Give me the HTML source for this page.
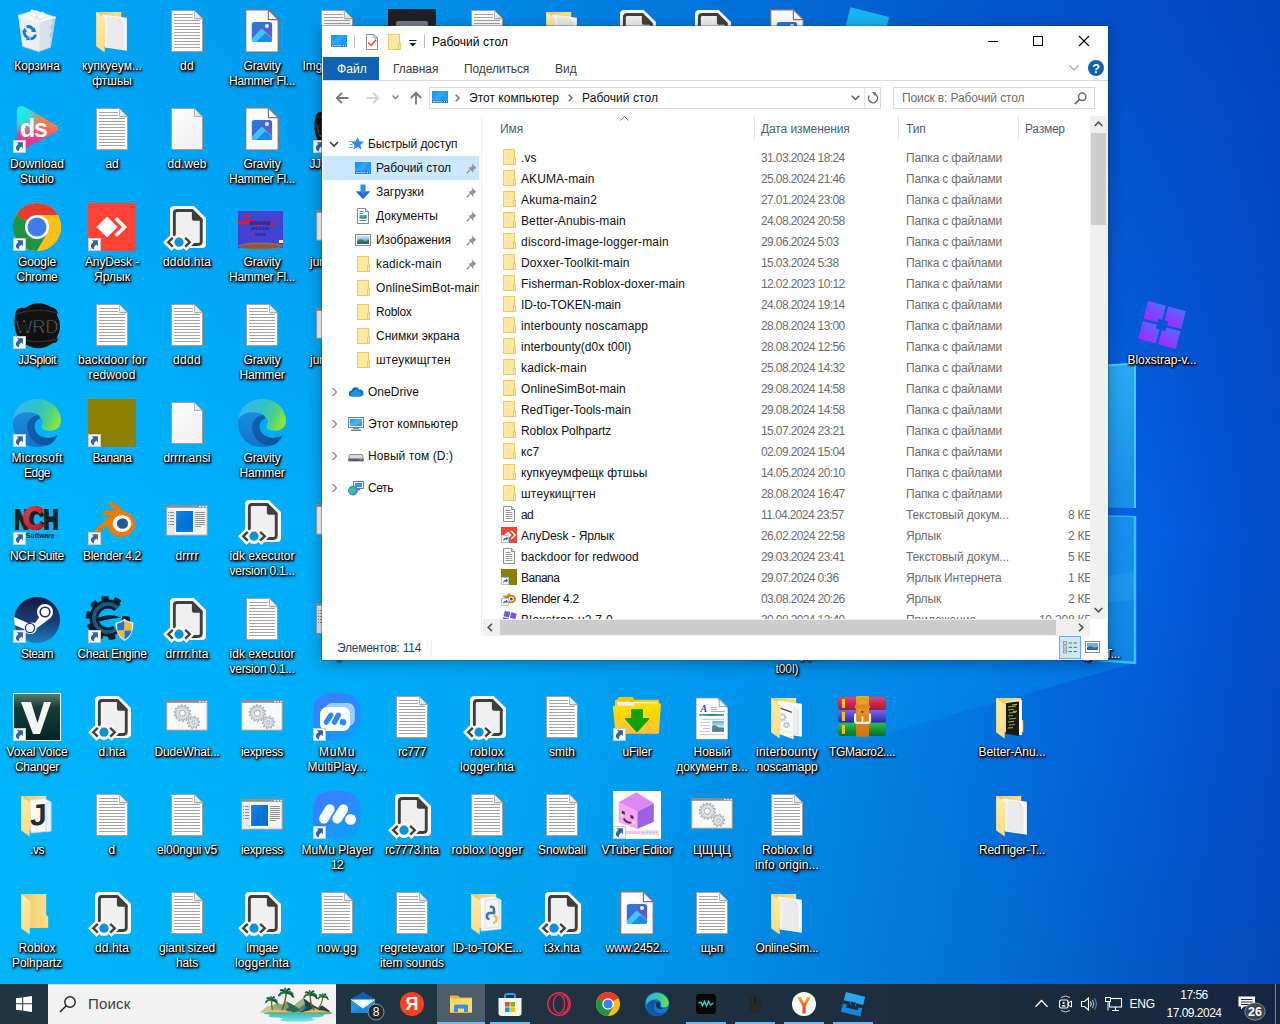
<!DOCTYPE html>
<html lang="ru">
<head>
<meta charset="utf-8">
<title>Рабочий стол</title>
<style>
html,body{margin:0;padding:0;}
body{width:1280px;height:1024px;overflow:hidden;position:relative;font-family:"Liberation Sans",sans-serif;font-size:12px;color:#000;background:#0478d4;}
#wall{position:absolute;left:0;top:0;width:1280px;height:1024px;}
.abs{position:absolute;}
/* desktop icons */
.di{position:absolute;width:75px;height:98px;}
.di .ic{position:absolute;left:13px;top:7px;width:48px;height:48px;}
.di .ic svg{position:absolute;left:0;top:0;width:48px;height:48px;overflow:visible;}
.di .lb{position:absolute;left:-4.500px;top:59px;width:83px;text-align:center;color:#fff;font-size:12px;line-height:15px;white-space:nowrap;letter-spacing:0;
 text-shadow:1px 1px 1px rgba(0,0,0,.85),0 1px 2px rgba(0,0,0,.95),1px 1px 2px rgba(0,0,0,.9),0 0 3px rgba(0,0,0,.75),1px 2px 3px rgba(0,0,0,.65);}
.sc{position:absolute;left:0;top:35px;width:13px;height:13px;}
/* taskbar */
#tb{position:absolute;left:0;top:984px;width:1280px;height:40px;background:#1d2d3a;}
/* window */
#win{position:absolute;left:322px;top:26px;width:786px;height:634px;background:#fff;box-shadow:0 0 0 1px rgba(20,80,140,.35),0 3px 14px rgba(0,0,0,.32);overflow:hidden;}
</style>
</head>
<body>
<svg id="wall" viewBox="0 0 1280 1024" width="1280" height="1024">
<defs>
<linearGradient id="wtop" gradientUnits="userSpaceOnUse" x1="0" y1="0" x2="1280" y2="0"><stop offset="0.0000" stop-color="#01a7f8"/><stop offset="0.0594" stop-color="#01a4f6"/><stop offset="0.2344" stop-color="#019aee"/><stop offset="0.4688" stop-color="#027fe0"/><stop offset="0.7305" stop-color="#035bcd"/><stop offset="0.8984" stop-color="#044cc6"/><stop offset="0.9375" stop-color="#0449c3"/><stop offset="1.0000" stop-color="#0445bf"/></linearGradient>
<linearGradient id="wmid" gradientUnits="userSpaceOnUse" x1="0" y1="0" x2="1280" y2="0"><stop offset="0.0000" stop-color="#00b5fc"/><stop offset="0.0586" stop-color="#00b4fc"/><stop offset="0.2344" stop-color="#01adf9"/><stop offset="0.4094" stop-color="#01a6f7"/><stop offset="0.5852" stop-color="#0192f0"/><stop offset="0.7109" stop-color="#0281e8"/><stop offset="0.8656" stop-color="#0464e2"/><stop offset="0.9023" stop-color="#0460e0"/><stop offset="0.9375" stop-color="#0458da"/><stop offset="0.9883" stop-color="#034ecb"/><stop offset="1.0000" stop-color="#034cc9"/></linearGradient>
<linearGradient id="wbot" gradientUnits="userSpaceOnUse" x1="0" y1="0" x2="1280" y2="0"><stop offset="0.0000" stop-color="#01b4f8"/><stop offset="0.0594" stop-color="#01b3f7"/><stop offset="0.2344" stop-color="#01b1f5"/><stop offset="0.4688" stop-color="#019cea"/><stop offset="0.7031" stop-color="#0279d9"/><stop offset="0.8203" stop-color="#0365cf"/><stop offset="0.9375" stop-color="#0450c2"/><stop offset="1.0000" stop-color="#0448bc"/></linearGradient>
<linearGradient id="wm1" gradientUnits="userSpaceOnUse" x1="0" y1="0" x2="0" y2="1024">
<stop offset="0" stop-color="#fff" stop-opacity="0"/><stop offset="0.527" stop-color="#fff" stop-opacity="1"/><stop offset="1" stop-color="#fff" stop-opacity="1"/></linearGradient>
<linearGradient id="wm2" gradientUnits="userSpaceOnUse" x1="0" y1="0" x2="0" y2="1024">
<stop offset="0" stop-color="#fff" stop-opacity="0"/><stop offset="0.527" stop-color="#fff" stop-opacity="0"/><stop offset="0.961" stop-color="#fff" stop-opacity="1"/><stop offset="1" stop-color="#fff" stop-opacity="1"/></linearGradient>
<mask id="wk1"><rect width="1280" height="1024" fill="url(#wm1)"/></mask>
<mask id="wk2"><rect width="1280" height="1024" fill="url(#wm2)"/></mask>
<linearGradient id="beam" gradientUnits="userSpaceOnUse" x1="1135" y1="0" x2="300" y2="0">
<stop offset="0" stop-color="#00b0ff" stop-opacity=".25"/>
<stop offset="1" stop-color="#00b0ff" stop-opacity="0"/>
</linearGradient>
<linearGradient id="pane1" x1="0" y1="0" x2="0" y2="1">
<stop offset="0" stop-color="#2aa9f3"/><stop offset="1" stop-color="#168fe8"/>
</linearGradient>
<linearGradient id="pane2" x1="0" y1="0" x2="0" y2="1">
<stop offset="0" stop-color="#1690ec"/><stop offset="1" stop-color="#0f86e6"/>
</linearGradient>
</defs>
<rect width="1280" height="1024" fill="url(#wtop)"/>
<rect width="1280" height="1024" fill="url(#wmid)" mask="url(#wk1)"/>
<rect width="1280" height="1024" fill="url(#wbot)" mask="url(#wk2)"/>
<!-- light beams -->
<polygon points="1135,663 1135,516 300,640 300,899" fill="url(#beam)"/>
<!-- window panes -->
<polygon points="1000,372 1135,363 1135,508 1000,506" fill="url(#pane1)"/>
<polygon points="1000,514 1135,516 1135,663 1000,652" fill="url(#pane2)"/>
<polygon points="1000,590 1135,572 1135,600 1000,612" fill="#2fa6f2" opacity=".35"/>
<path d="M1000,372.500 L1135,363.500 L1135,508" fill="none" stroke="#48d3ff" stroke-width="2" opacity=".9"/>
<path d="M1135,516 L1135,663 L1000,652" fill="none" stroke="#3cc8ff" stroke-width="2.500" opacity=".9"/>
<path d="M1000,514.500 L1135,516.500" fill="none" stroke="#35baf8" stroke-width="1.500" opacity=".8"/>
</svg>
<div id="desk">
<div class="di" style="left:0px;top:0px"><div class="ic"><svg viewBox="0 0 48 48"><path d="M5.200,8.300 L22.300,3.600 L42.600,10.200 L26.300,14.900Z" fill="#dfe6ee"/><path d="M10,8.500 L14,5.500 L17,4.500 L18.500,2 L21,3.500 L24,4 L27,5.500 L30,4.500 L32,7 L35,8.500 L38,10 L33,13 L27,14.500 L20,13 L13,10.500Z" fill="#f5f6f8"/><path d="M16,7 L19,4 L22,6 L24,9 L20,10Z" fill="#fdfdfd" stroke="#d5dae0" stroke-width=".5"/><path d="M24,9 L28,6 L32,8 L31,11 L27,13Z" fill="#ffffff" stroke="#d0d6dd" stroke-width=".5"/><path d="M22,11 L25,10 L27.500,13 L26,15 L23,14Z" fill="#eceff2" stroke="#c9cfd6" stroke-width=".5"/><path d="M5.200,8.300 L26.300,14.900 L25.700,44.500 L9.400,39.200Z" fill="#f1f3f6" opacity=".96"/><path d="M26.300,14.900 L42.600,10.200 L37.900,40 L25.700,44.500Z" fill="#e0e5eb" opacity=".96"/><path d="M42.600,10.200 L37.900,40 L36.500,36 L38.500,32 L36,28 L39,24 L36.500,20 L40,16 L38,12.500Z" fill="#a5cdea" opacity=".85"/><path d="M5.200,8.300 L9.400,39.200 L10.500,36 L8.500,30 L9.500,24 L7.500,18 L8.500,13Z" fill="#cfe2f1" opacity=".8"/><path d="M9.400,39.200 L25.700,44.500 L37.900,40" fill="none" stroke="#e2cfc4" stroke-width="1"/><path d="M5.200,8.300 L26.300,14.900 L42.600,10.200" fill="none" stroke="#f9fbfd" stroke-width="1.200"/><path d="M5.200,8.300 L22.300,3.600 L42.600,10.200" fill="none" stroke="#d2e4f2" stroke-width=".8"/><path d="M26.300,14.900 L25.700,44.500" fill="none" stroke="#fafbfc" stroke-width=".8"/><g fill="none" stroke="#1b79d6" stroke-width="2.900"><path d="M13.500,19.800 Q18,18.500 20.500,23.500"/><path d="M11.200,23 Q10.500,28.500 14.500,30.500"/><path d="M17.500,31.800 Q22,31.500 22.300,27.500"/></g><g fill="#1b79d6"><path d="M18,24.800 L23.300,25.200 L21.500,20.500Z"/><path d="M16,29 L12.500,33.200 L17,33Z"/><path d="M9.200,24.500 L12,20.800 L14,25Z"/></g></svg></div><div class="lb">Корзина</div></div>
<div class="di" style="left:75px;top:0px"><div class="ic"><svg viewBox="0 0 48 48"><defs><linearGradient id="g1" x1="0" y1="0" x2="1" y2="0"><stop offset="0" stop-color="#e9c25f"/><stop offset=".35" stop-color="#f2d073"/><stop offset="1" stop-color="#fde08a"/></linearGradient><linearGradient id="g2" x1="0" y1="0" x2="0" y2="1"><stop offset="0" stop-color="#feeaa8"/><stop offset="1" stop-color="#fbdc86"/></linearGradient></defs><path d="M8.300,5 H33.200 V25.700 L35.200,27.800 V39 H8.300Z" fill="url(#g1)"/><rect x="16.500" y="38" width="18.700" height="1" fill="#ffd25e"/><path d="M14.350,7.550 L38.900,10.700 V43.700 L17,40.500Z" fill="#f8f8f9"/><path d="M18.800,10 L31.200,11.500 L34.900,16 V41.300 L18.800,39.300Z" fill="#ebebec" stroke="#f4f4f4" stroke-width=".6"/><path d="M31.200,11.500 L31.600,15.600 L34.900,16Z" fill="#dcdcdc"/><path d="M34.900,16 V41.300 L18.800,39.300" fill="none" stroke="#cfe3f2" stroke-width=".7"/><path d="M18.800,10 L31.200,11.500" fill="none" stroke="#f0e3b8" stroke-width=".6"/><path d="M8.300,5 L17.500,12.300 V34 H16.700 V45.600 L8.300,39.400Z" fill="url(#g2)"/></svg></div><div class="lb">купкуеум...<br>фтшьы</div></div>
<div class="di" style="left:150px;top:0px"><div class="ic"><svg viewBox="0 0 48 48"><defs><linearGradient id="g3" x1="0" y1="0" x2="1" y2="1"><stop offset="0" stop-color="#f7f7f7"/><stop offset="1" stop-color="#dcdcdc"/></linearGradient></defs><path d="M8.500,3.500 H31.500 L39.500,11.500 V44.500 H8.500Z" fill="#fff" stroke="#a89d98" stroke-width="1"/><path d="M31.500,3.500 V11.500 H39.500Z" fill="url(#g3)" stroke="#a8a3a0" stroke-width=".8" stroke-linejoin="round"/><path d="M31.800,12 H39" stroke="#8d8d8d" stroke-width=".7" opacity=".7"/><path d="M11,7.5 H29.9 M11,10.5 H29.9 M11,13.5 H36.9 M11,16.5 H36.9 M11,19.5 H36.9 M11,22.5 H36.9 M11,25.5 H36.9 M11,28.5 H36.9 M11,31.5 H36.9 M11,34.5 H36.9 M11,37.5 H36.9 M11,40.5 H36.9 " stroke="#a4a4a4" stroke-width="1.050" fill="none"/></svg></div><div class="lb"><span style="letter-spacing:0.32px">dd</span></div></div>
<div class="di" style="left:225px;top:0px"><div class="ic"><svg viewBox="0 0 48 48"><defs><linearGradient id="g4" x1=".2" y1="0" x2=".9" y2="1"><stop offset="0" stop-color="#1f7fe0"/><stop offset=".45" stop-color="#4a63cf"/><stop offset=".8" stop-color="#8a4fc0"/><stop offset="1" stop-color="#8a4fc0"/></linearGradient><clipPath id="g5"><rect x="13.800" y="14.900" width="20.300" height="20.100" rx="2.600"/></clipPath></defs><path d="M7.700,2.800 H30.400 L40.200,12.600 V45 H7.700Z" fill="#fbfbfb" stroke="#7f726c" stroke-width="1.200" stroke-linejoin="round"/><path d="M30.400,2.800 V12.600 H40.200Z" fill="#fdfdfd" stroke="#7f726c" stroke-width="1.200" stroke-linejoin="round"/><rect x="13.800" y="14.900" width="20.300" height="20.100" rx="2.600" fill="url(#g4)"/><g clip-path="url(#g5)"><path d="M12,33.500 L22.300,22.800 Q23.800,21.300 25.300,22.800 L36,33 V37 H12Z" fill="#3fc3f8"/><path d="M17,36.500 L26.300,27 Q27.500,25.800 28.700,27 L36,34 V37Z" fill="#1a8ce6"/></g><circle cx="29" cy="18.900" r="2" fill="#f4f4fa"/></svg></div><div class="lb"><span style="letter-spacing:-0.145px">Gravity</span><br><span style="letter-spacing:-0.279px">Hammer Fl...</span></div></div>
<div class="di" style="left:300px;top:0px"><div class="ic"><svg viewBox="0 0 48 48"><defs><linearGradient id="g6" x1="0" y1="0" x2="1" y2="1"><stop offset="0" stop-color="#f7f7f7"/><stop offset="1" stop-color="#dcdcdc"/></linearGradient></defs><path d="M8.500,3.500 H31.500 L39.500,11.500 V44.500 H8.500Z" fill="#fff" stroke="#a89d98" stroke-width="1"/><path d="M31.500,3.500 V11.500 H39.500Z" fill="url(#g6)" stroke="#a8a3a0" stroke-width=".8" stroke-linejoin="round"/><path d="M31.800,12 H39" stroke="#8d8d8d" stroke-width=".7" opacity=".7"/><path d="M11,7.5 H29.9 M11,10.5 H29.9 M11,13.5 H36.9 M11,16.5 H36.9 M11,19.5 H36.9 M11,22.5 H36.9 M11,25.5 H36.9 M11,28.5 H36.9 M11,31.5 H36.9 M11,34.5 H36.9 M11,37.5 H36.9 M11,40.5 H36.9 " stroke="#a4a4a4" stroke-width="1.050" fill="none"/></svg></div><div class="lb"><span style="letter-spacing:-0.087px">Imgae logger</span></div></div>
<div class="di" style="left:375px;top:0px"><div class="ic"><svg viewBox="0 0 48 48"><rect x="0" y="2" width="48" height="46" fill="#1f2024"/><rect x="8" y="14" width="32" height="34" rx="2" fill="#7a7a82"/><rect x="12" y="18" width="24" height="30" fill="#9a9aa4"/></svg></div><div class="lb">фыв</div></div>
<div class="di" style="left:450px;top:0px"><div class="ic"><svg viewBox="0 0 48 48"><defs><linearGradient id="g7" x1="0" y1="0" x2="1" y2="1"><stop offset="0" stop-color="#f7f7f7"/><stop offset="1" stop-color="#dcdcdc"/></linearGradient></defs><path d="M8.500,3.500 H31.500 L39.500,11.500 V44.500 H8.500Z" fill="#fff" stroke="#a89d98" stroke-width="1"/><path d="M31.500,3.500 V11.500 H39.500Z" fill="url(#g7)" stroke="#a8a3a0" stroke-width=".8" stroke-linejoin="round"/><path d="M31.800,12 H39" stroke="#8d8d8d" stroke-width=".7" opacity=".7"/><path d="M11,7.5 H29.9 M11,10.5 H29.9 M11,13.5 H36.9 M11,16.5 H36.9 M11,19.5 H36.9 M11,22.5 H36.9 M11,25.5 H36.9 M11,28.5 H36.9 M11,31.5 H36.9 M11,34.5 H36.9 M11,37.5 H36.9 M11,40.5 H36.9 " stroke="#a4a4a4" stroke-width="1.050" fill="none"/></svg></div><div class="lb">qwe</div></div>
<div class="di" style="left:525px;top:0px"><div class="ic"><svg viewBox="0 0 48 48"><defs><linearGradient id="g8" x1="0" y1="0" x2="1" y2="0"><stop offset="0" stop-color="#e9c25f"/><stop offset=".35" stop-color="#f2d073"/><stop offset="1" stop-color="#fde08a"/></linearGradient><linearGradient id="g9" x1="0" y1="0" x2="0" y2="1"><stop offset="0" stop-color="#feeaa8"/><stop offset="1" stop-color="#fbdc86"/></linearGradient></defs><path d="M8.300,5 H33.200 V25.700 L35.200,27.800 V39 H8.300Z" fill="url(#g8)"/><rect x="16.500" y="38" width="18.700" height="1" fill="#ffd25e"/><path d="M14.350,7.550 L38.900,10.700 V43.700 L17,40.500Z" fill="#f8f8f9"/><path d="M18.800,10 L31.200,11.500 L34.900,16 V41.300 L18.800,39.300Z" fill="#ebebec" stroke="#f4f4f4" stroke-width=".6"/><path d="M31.200,11.500 L31.600,15.600 L34.900,16Z" fill="#dcdcdc"/><path d="M34.900,16 V41.300 L18.800,39.300" fill="none" stroke="#cfe3f2" stroke-width=".7"/><path d="M18.800,10 L31.200,11.500" fill="none" stroke="#f0e3b8" stroke-width=".6"/><path d="M8.300,5 L17.500,12.300 V34 H16.700 V45.600 L8.300,39.400Z" fill="url(#g9)"/></svg></div><div class="lb"><span style="letter-spacing:0.088px">kadick-main</span></div></div>
<div class="di" style="left:600px;top:0px"><div class="ic"><svg viewBox="0 0 48 48"><path d="M11.500,3 H30.800 L43,15 V41 Q43,45 39,45 H11 Q7,45 7,41 V7 Q7,3 11.500,3Z" fill="#fbf8f5"/><path d="M0.300,39.200 L8.600,30.900 L16,38 L23.400,30.900 L31.700,39.200 L23.400,47.700 L19.500,44 L16,46.800 L12.500,44 L8.600,47.700Z" fill="#fbf8f5"/><circle cx="16" cy="39.200" r="7.600" fill="#fbf8f5"/><path d="M14,7.500 H29.300 L38.250,16.500 V38.500 Q38.250,41.450 35.300,41.450 H14 Q11.350,41.450 11.350,38.500 V10.500 Q11.350,7.500 14,7.500Z" fill="#f0f0f1" stroke="#3f3f3f" stroke-width="2.900" stroke-linejoin="round"/><path d="M28.900,6.100 L39.700,16.900 V17.800 H30.900 Q28.900,17.800 28.900,15.800Z" fill="#3f3f3f"/><path d="M0.300,39.200 L8.600,30.900 L16.900,39.200 L8.600,47.700Z M15.100,39.200 L23.400,30.900 L31.700,39.200 L23.400,47.700Z" fill="#fbf8f5"/><circle cx="16" cy="39.200" r="7.600" fill="#fbf8f5"/><path d="M9.800,34.800 L5.200,39.200 L9.800,43.600" fill="none" stroke="#3f3f3f" stroke-width="2.300"/><path d="M22.200,34.800 L26.800,39.200 L22.200,43.600" fill="none" stroke="#3f3f3f" stroke-width="2.300"/><circle cx="16" cy="39.200" r="4.600" fill="#0a93d8"/></svg></div><div class="lb"><span style="letter-spacing:0.059px">q.hta</span></div></div>
<div class="di" style="left:675px;top:0px"><div class="ic"><svg viewBox="0 0 48 48"><path d="M11.500,3 H30.800 L43,15 V41 Q43,45 39,45 H11 Q7,45 7,41 V7 Q7,3 11.500,3Z" fill="#fbf8f5"/><path d="M0.300,39.200 L8.600,30.900 L16,38 L23.400,30.900 L31.700,39.200 L23.400,47.700 L19.500,44 L16,46.800 L12.500,44 L8.600,47.700Z" fill="#fbf8f5"/><circle cx="16" cy="39.200" r="7.600" fill="#fbf8f5"/><path d="M14,7.500 H29.300 L38.250,16.500 V38.500 Q38.250,41.450 35.300,41.450 H14 Q11.350,41.450 11.350,38.500 V10.500 Q11.350,7.500 14,7.500Z" fill="#f0f0f1" stroke="#3f3f3f" stroke-width="2.900" stroke-linejoin="round"/><path d="M28.900,6.100 L39.700,16.900 V17.800 H30.900 Q28.900,17.800 28.900,15.800Z" fill="#3f3f3f"/><path d="M0.300,39.200 L8.600,30.900 L16.900,39.200 L8.600,47.700Z M15.100,39.200 L23.400,30.900 L31.700,39.200 L23.400,47.700Z" fill="#fbf8f5"/><circle cx="16" cy="39.200" r="7.600" fill="#fbf8f5"/><path d="M9.800,34.800 L5.200,39.200 L9.800,43.600" fill="none" stroke="#3f3f3f" stroke-width="2.300"/><path d="M22.200,34.800 L26.800,39.200 L22.200,43.600" fill="none" stroke="#3f3f3f" stroke-width="2.300"/><circle cx="16" cy="39.200" r="4.600" fill="#0a93d8"/></svg></div><div class="lb"><span style="letter-spacing:0.194px">w.hta</span></div></div>
<div class="di" style="left:750px;top:0px"><div class="ic"><svg viewBox="0 0 48 48"><defs><linearGradient id="g10" x1=".2" y1="0" x2=".9" y2="1"><stop offset="0" stop-color="#1f7fe0"/><stop offset=".45" stop-color="#4a63cf"/><stop offset=".8" stop-color="#8a4fc0"/><stop offset="1" stop-color="#8a4fc0"/></linearGradient><clipPath id="g11"><rect x="13.800" y="14.900" width="20.300" height="20.100" rx="2.600"/></clipPath></defs><path d="M7.700,2.800 H30.400 L40.200,12.600 V45 H7.700Z" fill="#fbfbfb" stroke="#7f726c" stroke-width="1.200" stroke-linejoin="round"/><path d="M30.400,2.800 V12.600 H40.200Z" fill="#fdfdfd" stroke="#7f726c" stroke-width="1.200" stroke-linejoin="round"/><rect x="13.800" y="14.900" width="20.300" height="20.100" rx="2.600" fill="url(#g10)"/><g clip-path="url(#g11)"><path d="M12,33.500 L22.300,22.800 Q23.800,21.300 25.300,22.800 L36,33 V37 H12Z" fill="#3fc3f8"/><path d="M17,36.500 L26.300,27 Q27.500,25.800 28.700,27 L36,34 V37Z" fill="#1a8ce6"/></g><circle cx="29" cy="18.900" r="2" fill="#f4f4fa"/></svg></div><div class="lb"><span style="letter-spacing:-0.138px">image</span></div></div>
<div class="di" style="left:825px;top:0px"><div class="ic"><svg viewBox="0 0 48 48"><g transform="rotate(14 24 28)"><path d="M6,4 H46 V26 H30 V32 H18 V26 H6Z" fill="#17b5f0"/><path d="M6,52 V34 H14 V38 H36 V34 H46 V52Z" fill="#0e8ee0"/></g></svg></div><div class="lb"><span style="letter-spacing:-0.055px">Roblox Studio</span></div></div>
<div class="di" style="left:0px;top:98px"><div class="ic"><svg viewBox="0 0 48 48"><defs><linearGradient id="g12" x1=".6" y1="0" x2=".3" y2="1"><stop offset="0" stop-color="#f8a04a"/><stop offset=".35" stop-color="#f37a52"/><stop offset=".65" stop-color="#ee4585"/><stop offset="1" stop-color="#c8349c"/></linearGradient><radialGradient id="g13" cx="0.1" cy="0.16" r=".5"><stop offset="0" stop-color="#12f2ec"/><stop offset=".45" stop-color="#22e4e0" stop-opacity=".9"/><stop offset="1" stop-color="#40c0e0" stop-opacity="0"/></radialGradient></defs><path d="M8.500,1.200 Q3.900,1.200 3.900,6 V40 Q3.900,47.500 10.500,44.500 L43,27 Q47.500,23.500 43,20 L12,2.300 Q10,1.200 8.500,1.200Z" fill="url(#g12)"/><path d="M8.500,1.200 Q3.900,1.200 3.900,6 V40 Q3.900,47.500 10.500,44.500 L43,27 Q47.500,23.500 43,20 L12,2.300 Q10,1.200 8.500,1.200Z" fill="url(#g13)"/><text x="7" y="32" font-size="25" font-weight="bold" fill="#fff" font-family="Liberation Sans, sans-serif" letter-spacing="-1.200">ds</text><g><rect x="0.500" y="35.500" width="12" height="12" fill="#fbfbfb" stroke="#d4c9c9" stroke-width="1"/><path d="M3.800,37.300 H9.900 V43.300 L8.200,41.600 Q5.700,43 5.700,46.600 Q2.200,44.600 3,42 Q3.700,40 5.500,39.100Z" fill="#2f62a8"/></g></svg></div><div class="lb"><span style="letter-spacing:0.078px">Download</span><br>Studio</div></div>
<div class="di" style="left:75px;top:98px"><div class="ic"><svg viewBox="0 0 48 48"><defs><linearGradient id="g14" x1="0" y1="0" x2="1" y2="1"><stop offset="0" stop-color="#f7f7f7"/><stop offset="1" stop-color="#dcdcdc"/></linearGradient></defs><path d="M8.500,3.500 H31.500 L39.500,11.500 V44.500 H8.500Z" fill="#fff" stroke="#a89d98" stroke-width="1"/><path d="M31.500,3.500 V11.500 H39.500Z" fill="url(#g14)" stroke="#a8a3a0" stroke-width=".8" stroke-linejoin="round"/><path d="M31.800,12 H39" stroke="#8d8d8d" stroke-width=".7" opacity=".7"/><path d="M11,7.5 H29.9 M11,10.5 H29.9 M11,13.5 H36.9 M11,16.5 H36.9 M11,19.5 H36.9 M11,22.5 H36.9 M11,25.5 H36.9 M11,28.5 H36.9 M11,31.5 H36.9 M11,34.5 H36.9 M11,37.5 H36.9 M11,40.5 H36.9 " stroke="#a4a4a4" stroke-width="1.050" fill="none"/></svg></div><div class="lb"><span style="letter-spacing:-0.18px">ad</span></div></div>
<div class="di" style="left:150px;top:98px"><div class="ic"><svg viewBox="0 0 48 48"><defs><linearGradient id="g15" x1="0" y1="0" x2="1" y2="1"><stop offset="0" stop-color="#fdfdfd"/><stop offset="1" stop-color="#eeeff2"/></linearGradient><linearGradient id="g16" x1="0" y1="0" x2="1" y2="1"><stop offset="0" stop-color="#f4f4f4"/><stop offset="1" stop-color="#d9d9dc"/></linearGradient></defs><path d="M8.500,3.500 H31.500 L39.500,11.500 V44.500 H8.500Z" fill="url(#g15)" stroke="#a09c9c" stroke-width="1"/><path d="M31.500,3.500 V11.500 H39.500Z" fill="url(#g16)" stroke="#a09c9c" stroke-width=".8" stroke-linejoin="round"/></svg></div><div class="lb"><span style="letter-spacing:0.049px">dd.web</span></div></div>
<div class="di" style="left:225px;top:98px"><div class="ic"><svg viewBox="0 0 48 48"><defs><linearGradient id="g17" x1=".2" y1="0" x2=".9" y2="1"><stop offset="0" stop-color="#1f7fe0"/><stop offset=".45" stop-color="#4a63cf"/><stop offset=".8" stop-color="#8a4fc0"/><stop offset="1" stop-color="#8a4fc0"/></linearGradient><clipPath id="g18"><rect x="13.800" y="14.900" width="20.300" height="20.100" rx="2.600"/></clipPath></defs><path d="M7.700,2.800 H30.400 L40.200,12.600 V45 H7.700Z" fill="#fbfbfb" stroke="#7f726c" stroke-width="1.200" stroke-linejoin="round"/><path d="M30.400,2.800 V12.600 H40.200Z" fill="#fdfdfd" stroke="#7f726c" stroke-width="1.200" stroke-linejoin="round"/><rect x="13.800" y="14.900" width="20.300" height="20.100" rx="2.600" fill="url(#g17)"/><g clip-path="url(#g18)"><path d="M12,33.500 L22.300,22.800 Q23.800,21.300 25.300,22.800 L36,33 V37 H12Z" fill="#3fc3f8"/><path d="M17,36.500 L26.300,27 Q27.500,25.800 28.700,27 L36,34 V37Z" fill="#1a8ce6"/></g><circle cx="29" cy="18.900" r="2" fill="#f4f4fa"/></svg></div><div class="lb"><span style="letter-spacing:-0.145px">Gravity</span><br><span style="letter-spacing:-0.279px">Hammer Fl...</span></div></div>
<div class="di" style="left:300px;top:98px"><div class="ic"><svg viewBox="0 0 48 48"><path d="M3,10 Q6,6 12,7 Q24,-2 38,6 Q46,8 44,14 Q50,26 44,36 Q46,42 40,42 Q26,52 12,43 Q4,44 5,37 Q-1,24 3,10Z" fill="#111"/><path d="M3,13 Q24,6 45,12 M4,37 Q24,44 45,38" stroke="#2c2c2c" stroke-width="1.500" fill="none"/><text x="24" y="31.500" font-size="18" fill="#e8e8e8" text-anchor="middle" font-family="Liberation Sans, sans-serif" letter-spacing="0" stroke="#111" stroke-width="1.200">WRD</text><g><rect x="0.500" y="35.500" width="12" height="12" fill="#fbfbfb" stroke="#d4c9c9" stroke-width="1"/><path d="M3.800,37.300 H9.900 V43.300 L8.200,41.600 Q5.700,43 5.700,46.600 Q2.200,44.600 3,42 Q3.700,40 5.500,39.100Z" fill="#2f62a8"/></g></svg></div><div class="lb"><span style="letter-spacing:-0.419px">JJSploit (1)</span></div></div>
<div class="di" style="left:0px;top:196px"><div class="ic"><svg viewBox="0 0 48 48"><circle cx="24" cy="24" r="24" fill="#fbc116"/><path d="M24,24 L3.200,12 A24,24 0 0 1 44.800,12 Z" fill="#e33b2e"/><path d="M24,24 L3.200,12 A24,24 0 0 0 24,48 L34.400,30 Z" fill="#229342"/><path d="M24,24 L44.800,12 H24z" fill="#e33b2e"/><path d="M24,24 L34.400,30 L24,48 A24,24 0 0 0 44.800,12 H24Z" fill="#fbc116"/><circle cx="24" cy="24" r="12" fill="#fff"/><circle cx="24" cy="24" r="9.500" fill="#3f7de8"/><g><rect x="0.500" y="35.500" width="12" height="12" fill="#fbfbfb" stroke="#d4c9c9" stroke-width="1"/><path d="M3.800,37.300 H9.900 V43.300 L8.200,41.600 Q5.700,43 5.700,46.600 Q2.200,44.600 3,42 Q3.700,40 5.500,39.100Z" fill="#2f62a8"/></g></svg></div><div class="lb"><span style="letter-spacing:-0.117px">Google</span><br><span style="letter-spacing:-0.281px">Chrome</span></div></div>
<div class="di" style="left:75px;top:196px"><div class="ic"><svg viewBox="0 0 48 48"><rect width="48" height="48" fill="#ff4235"/><path d="M8.500,24 L19,13.500 L29.500,24 L19,34.500Z" fill="#fff"/><path d="M26.500,16.500 L29,14 L39,24 L29,34 L26.500,31.500 L34,24Z" fill="#fff"/><g><rect x="0.500" y="35.500" width="12" height="12" fill="#fbfbfb" stroke="#d4c9c9" stroke-width="1"/><path d="M3.800,37.300 H9.900 V43.300 L8.200,41.600 Q5.700,43 5.700,46.600 Q2.200,44.600 3,42 Q3.700,40 5.500,39.100Z" fill="#2f62a8"/></g></svg></div><div class="lb"><span style="letter-spacing:-0.151px">AnyDesk -</span><br>Ярлык</div></div>
<div class="di" style="left:150px;top:196px"><div class="ic"><svg viewBox="0 0 48 48"><path d="M11.500,3 H30.800 L43,15 V41 Q43,45 39,45 H11 Q7,45 7,41 V7 Q7,3 11.500,3Z" fill="#fbf8f5"/><path d="M0.300,39.200 L8.600,30.900 L16,38 L23.400,30.900 L31.700,39.200 L23.400,47.700 L19.500,44 L16,46.800 L12.500,44 L8.600,47.700Z" fill="#fbf8f5"/><circle cx="16" cy="39.200" r="7.600" fill="#fbf8f5"/><path d="M14,7.500 H29.300 L38.250,16.500 V38.500 Q38.250,41.450 35.300,41.450 H14 Q11.350,41.450 11.350,38.500 V10.500 Q11.350,7.500 14,7.500Z" fill="#f0f0f1" stroke="#3f3f3f" stroke-width="2.900" stroke-linejoin="round"/><path d="M28.900,6.100 L39.700,16.900 V17.800 H30.900 Q28.900,17.800 28.900,15.800Z" fill="#3f3f3f"/><path d="M0.300,39.200 L8.600,30.900 L16.900,39.200 L8.600,47.700Z M15.100,39.200 L23.400,30.900 L31.700,39.200 L23.400,47.700Z" fill="#fbf8f5"/><circle cx="16" cy="39.200" r="7.600" fill="#fbf8f5"/><path d="M9.800,34.800 L5.200,39.200 L9.800,43.600" fill="none" stroke="#3f3f3f" stroke-width="2.300"/><path d="M22.200,34.800 L26.800,39.200 L22.200,43.600" fill="none" stroke="#3f3f3f" stroke-width="2.300"/><circle cx="16" cy="39.200" r="4.600" fill="#0a93d8"/></svg></div><div class="lb"><span style="letter-spacing:0.16px">dddd.hta</span></div></div>
<div class="di" style="left:225px;top:196px"><div class="ic"><svg viewBox="0 0 48 48"><rect x="0" y="8" width="45" height="37" fill="#4143d4"/><ellipse cx="22.500" cy="43" rx="22" ry="3.500" fill="#a06a48"/><ellipse cx="22.500" cy="43.500" rx="20" ry="2.200" fill="#8a583a"/><g fill="#f01818"><ellipse cx="10" cy="13" rx="2.500" ry="2"/><ellipse cx="6" cy="20" rx="6" ry="1.600"/><ellipse cx="1.500" cy="19" rx="1.500" ry="2"/><ellipse cx="12" cy="18" rx="4" ry="1"/><ellipse cx="34" cy="21.500" rx="2.200" ry="1.500"/><ellipse cx="39" cy="20" rx="1" ry=".8"/><ellipse cx="37" cy="15.500" rx="1.200" ry=".9"/><ellipse cx="20" cy="22" rx="2" ry="1"/><ellipse cx="27" cy="18" rx="1.500" ry=".8"/></g><path d="M12,28 q2,5 6,4" fill="none" stroke="#e02020" stroke-width=".6"/><text x="22" y="21.500" font-size="4.500" fill="#151540" text-anchor="middle" font-family="Liberation Sans, sans-serif">WWWWW</text><text x="22" y="27" font-size="4.200" fill="#151540" text-anchor="middle" font-family="Liberation Sans, sans-serif">49324345</text><text x="22" y="32.500" font-size="4" fill="#151540" text-anchor="middle" font-family="Liberation Sans, sans-serif">34903</text><rect x="41" y="37" width="4" height="3" fill="#f1efe6"/></svg></div><div class="lb"><span style="letter-spacing:-0.145px">Gravity</span><br><span style="letter-spacing:-0.279px">Hammer Fl...</span></div></div>
<div class="di" style="left:300px;top:196px"><div class="ic"><svg viewBox="0 0 48 48"><rect x="3.700" y="7.700" width="40.500" height="29.500" fill="#fafafa" stroke="#a39d9a" stroke-width="1"/><rect x="3.200" y="7.200" width="41.500" height="2.600" fill="#8a8a8a"/><rect x="36" y="8" width="1.900" height="1.200" fill="#e8e8e8"/><rect x="39.100" y="8" width="1.900" height="1.200" fill="#e8e8e8"/><rect x="42.100" y="8" width="1.900" height="1.200" fill="#e8e8e8"/><polygon points="25.70,20.20 27.76,21.03 27.59,22.07 25.37,22.20 25.08,22.93 26.57,24.57 25.97,25.44 23.91,24.59 23.33,25.13 23.96,27.25 23.04,27.77 21.56,26.12 20.80,26.34 20.45,28.53 19.40,28.60 18.78,26.47 18.00,26.34 16.73,28.17 15.76,27.77 16.12,25.58 15.47,25.13 13.54,26.22 12.83,25.44 14.11,23.62 13.72,22.93 11.51,23.08 11.21,22.07 13.15,20.99 13.10,20.20 11.04,19.37 11.21,18.33 13.43,18.20 13.72,17.47 12.23,15.83 12.83,14.96 14.89,15.81 15.47,15.27 14.84,13.15 15.76,12.63 17.24,14.28 18.00,14.06 18.35,11.87 19.40,11.80 20.02,13.93 20.80,14.06 22.07,12.23 23.04,12.63 22.68,14.82 23.33,15.27 25.26,14.18 25.97,14.96 24.69,16.78 25.08,17.47 27.29,17.32 27.59,18.33 25.65,19.41" fill="#dadfe4" stroke="#8f949a" stroke-width=".7" stroke-linejoin="round"/><circle cx="19.4" cy="20.2" r="3" fill="#fafafa" stroke="#8f949a" stroke-width=".7"/><polygon points="34.80,30.73 36.20,32.07 35.65,33.03 33.79,32.48 33.20,33.00 33.54,34.92 32.53,35.36 31.35,33.82 30.56,33.90 29.72,35.65 28.64,35.42 28.59,33.47 27.91,33.08 26.19,34.00 25.46,33.17 26.56,31.57 26.24,30.85 24.31,30.59 24.20,29.49 26.03,28.84 26.20,28.07 24.80,26.73 25.35,25.77 27.21,26.32 27.80,25.80 27.46,23.88 28.47,23.44 29.65,24.98 30.44,24.90 31.28,23.15 32.36,23.38 32.41,25.33 33.09,25.72 34.81,24.80 35.54,25.63 34.44,27.23 34.76,27.95 36.69,28.21 36.80,29.31 34.97,29.96" fill="#dadfe4" stroke="#8f949a" stroke-width=".7" stroke-linejoin="round"/><circle cx="30.5" cy="29.4" r="1.5" fill="#fafafa" stroke="#8f949a" stroke-width=".7"/></svg></div><div class="lb">junkcodes</div></div>
<div class="di" style="left:0px;top:294px"><div class="ic"><svg viewBox="0 0 48 48"><path d="M3,10 Q6,6 12,7 Q24,-2 38,6 Q46,8 44,14 Q50,26 44,36 Q46,42 40,42 Q26,52 12,43 Q4,44 5,37 Q-1,24 3,10Z" fill="#111"/><path d="M3,13 Q24,6 45,12 M4,37 Q24,44 45,38" stroke="#2c2c2c" stroke-width="1.500" fill="none"/><text x="24" y="31.500" font-size="18" fill="#e8e8e8" text-anchor="middle" font-family="Liberation Sans, sans-serif" letter-spacing="0" stroke="#111" stroke-width="1.200">WRD</text><g><rect x="0.500" y="35.500" width="12" height="12" fill="#fbfbfb" stroke="#d4c9c9" stroke-width="1"/><path d="M3.800,37.300 H9.900 V43.300 L8.200,41.600 Q5.700,43 5.700,46.600 Q2.200,44.600 3,42 Q3.700,40 5.500,39.100Z" fill="#2f62a8"/></g></svg></div><div class="lb"><span style="letter-spacing:-0.504px">JJSploit</span></div></div>
<div class="di" style="left:75px;top:294px"><div class="ic"><svg viewBox="0 0 48 48"><defs><linearGradient id="g19" x1="0" y1="0" x2="1" y2="1"><stop offset="0" stop-color="#f7f7f7"/><stop offset="1" stop-color="#dcdcdc"/></linearGradient></defs><path d="M8.500,3.500 H31.500 L39.500,11.500 V44.500 H8.500Z" fill="#fff" stroke="#a89d98" stroke-width="1"/><path d="M31.500,3.500 V11.500 H39.500Z" fill="url(#g19)" stroke="#a8a3a0" stroke-width=".8" stroke-linejoin="round"/><path d="M31.800,12 H39" stroke="#8d8d8d" stroke-width=".7" opacity=".7"/><path d="M11,7.5 H29.9 M11,10.5 H29.9 M11,13.5 H36.9 M11,16.5 H36.9 M11,19.5 H36.9 M11,22.5 H36.9 M11,25.5 H36.9 M11,28.5 H36.9 M11,31.5 H36.9 M11,34.5 H36.9 M11,37.5 H36.9 M11,40.5 H36.9 " stroke="#a4a4a4" stroke-width="1.050" fill="none"/></svg></div><div class="lb"><span style="letter-spacing:0.108px">backdoor for</span><br><span style="letter-spacing:0.138px">redwood</span></div></div>
<div class="di" style="left:150px;top:294px"><div class="ic"><svg viewBox="0 0 48 48"><defs><linearGradient id="g20" x1="0" y1="0" x2="1" y2="1"><stop offset="0" stop-color="#f7f7f7"/><stop offset="1" stop-color="#dcdcdc"/></linearGradient></defs><path d="M8.500,3.500 H31.500 L39.500,11.500 V44.500 H8.500Z" fill="#fff" stroke="#a89d98" stroke-width="1"/><path d="M31.500,3.500 V11.500 H39.500Z" fill="url(#g20)" stroke="#a8a3a0" stroke-width=".8" stroke-linejoin="round"/><path d="M31.800,12 H39" stroke="#8d8d8d" stroke-width=".7" opacity=".7"/><path d="M11,7.5 H29.9 M11,10.5 H29.9 M11,13.5 H36.9 M11,16.5 H36.9 M11,19.5 H36.9 M11,22.5 H36.9 M11,25.5 H36.9 M11,28.5 H36.9 M11,31.5 H36.9 M11,34.5 H36.9 M11,37.5 H36.9 M11,40.5 H36.9 " stroke="#a4a4a4" stroke-width="1.050" fill="none"/></svg></div><div class="lb"><span style="letter-spacing:0.324px">dddd</span></div></div>
<div class="di" style="left:225px;top:294px"><div class="ic"><svg viewBox="0 0 48 48"><defs><linearGradient id="g21" x1="0" y1="0" x2="1" y2="1"><stop offset="0" stop-color="#f7f7f7"/><stop offset="1" stop-color="#dcdcdc"/></linearGradient></defs><path d="M8.500,3.500 H31.500 L39.500,11.500 V44.500 H8.500Z" fill="#fff" stroke="#a89d98" stroke-width="1"/><path d="M31.500,3.500 V11.500 H39.500Z" fill="url(#g21)" stroke="#a8a3a0" stroke-width=".8" stroke-linejoin="round"/><path d="M31.800,12 H39" stroke="#8d8d8d" stroke-width=".7" opacity=".7"/><path d="M11,7.5 H29.9 M11,10.5 H29.9 M11,13.5 H36.9 M11,16.5 H36.9 M11,19.5 H36.9 M11,22.5 H36.9 M11,25.5 H36.9 M11,28.5 H36.9 M11,31.5 H36.9 M11,34.5 H36.9 M11,37.5 H36.9 M11,40.5 H36.9 " stroke="#a4a4a4" stroke-width="1.050" fill="none"/></svg></div><div class="lb"><span style="letter-spacing:-0.145px">Gravity</span><br><span style="letter-spacing:-0.169px">Hammer</span></div></div>
<div class="di" style="left:300px;top:294px"><div class="ic"><svg viewBox="0 0 48 48"><rect x="3.700" y="7.700" width="40.500" height="29.500" fill="#fafafa" stroke="#a39d9a" stroke-width="1"/><rect x="3.200" y="7.200" width="41.500" height="2.600" fill="#8a8a8a"/><rect x="36" y="8" width="1.900" height="1.200" fill="#e8e8e8"/><rect x="39.100" y="8" width="1.900" height="1.200" fill="#e8e8e8"/><rect x="42.100" y="8" width="1.900" height="1.200" fill="#e8e8e8"/><polygon points="25.70,20.20 27.76,21.03 27.59,22.07 25.37,22.20 25.08,22.93 26.57,24.57 25.97,25.44 23.91,24.59 23.33,25.13 23.96,27.25 23.04,27.77 21.56,26.12 20.80,26.34 20.45,28.53 19.40,28.60 18.78,26.47 18.00,26.34 16.73,28.17 15.76,27.77 16.12,25.58 15.47,25.13 13.54,26.22 12.83,25.44 14.11,23.62 13.72,22.93 11.51,23.08 11.21,22.07 13.15,20.99 13.10,20.20 11.04,19.37 11.21,18.33 13.43,18.20 13.72,17.47 12.23,15.83 12.83,14.96 14.89,15.81 15.47,15.27 14.84,13.15 15.76,12.63 17.24,14.28 18.00,14.06 18.35,11.87 19.40,11.80 20.02,13.93 20.80,14.06 22.07,12.23 23.04,12.63 22.68,14.82 23.33,15.27 25.26,14.18 25.97,14.96 24.69,16.78 25.08,17.47 27.29,17.32 27.59,18.33 25.65,19.41" fill="#dadfe4" stroke="#8f949a" stroke-width=".7" stroke-linejoin="round"/><circle cx="19.4" cy="20.2" r="3" fill="#fafafa" stroke="#8f949a" stroke-width=".7"/><polygon points="34.80,30.73 36.20,32.07 35.65,33.03 33.79,32.48 33.20,33.00 33.54,34.92 32.53,35.36 31.35,33.82 30.56,33.90 29.72,35.65 28.64,35.42 28.59,33.47 27.91,33.08 26.19,34.00 25.46,33.17 26.56,31.57 26.24,30.85 24.31,30.59 24.20,29.49 26.03,28.84 26.20,28.07 24.80,26.73 25.35,25.77 27.21,26.32 27.80,25.80 27.46,23.88 28.47,23.44 29.65,24.98 30.44,24.90 31.28,23.15 32.36,23.38 32.41,25.33 33.09,25.72 34.81,24.80 35.54,25.63 34.44,27.23 34.76,27.95 36.69,28.21 36.80,29.31 34.97,29.96" fill="#dadfe4" stroke="#8f949a" stroke-width=".7" stroke-linejoin="round"/><circle cx="30.5" cy="29.4" r="1.5" fill="#fafafa" stroke="#8f949a" stroke-width=".7"/></svg></div><div class="lb">junkcodes</div></div>
<div class="di" style="left:0px;top:392px"><div class="ic"><svg viewBox="0 0 48 48"><defs><linearGradient id="g22" x1="0" y1=".2" x2="1" y2=".5"><stop offset="0" stop-color="#3cb4f2"/><stop offset=".5" stop-color="#2fc3c6"/><stop offset=".78" stop-color="#4fd08a"/><stop offset="1" stop-color="#86e63c"/></linearGradient><linearGradient id="g23" x1="0" y1="0" x2="0" y2="1"><stop offset="0" stop-color="#1a8ddc"/><stop offset="1" stop-color="#1372cf"/></linearGradient><linearGradient id="g24" x1="0" y1="0" x2="1" y2="1"><stop offset="0" stop-color="#0f63b4"/><stop offset="1" stop-color="#11509a"/></linearGradient></defs><path d="M0.200,21 C1.500,8 12,0 24.500,0 C38,0 48,10 48,22 C48,29 42,32 36,31.800 C30,31.500 27,29 29,26 C31,23 29.500,18.500 25,16 C17,12 5,14 0.200,24Z" fill="url(#g22)"/><path d="M0.200,21 C-1.500,36 9,48 24,48 C28,48 31,47.500 33,46.500 C22,46 13.500,38 14,28 C14.300,21 20,15.800 26,16.200 C18,11.500 4,12 0.200,21Z" fill="url(#g23)"/><path d="M26,16.200 C19,15.500 13.500,22 14,29 C14.500,40 24,47.500 34,46.500 C39,45 43,41 44.500,36 C38,40.500 28,40 23.500,33.500 C20,28 21.500,21.500 27,19.500 C27,18 26.700,17 26,16.200Z" fill="url(#g24)"/><g><rect x="0.500" y="35.500" width="12" height="12" fill="#fbfbfb" stroke="#d4c9c9" stroke-width="1"/><path d="M3.800,37.300 H9.900 V43.300 L8.200,41.600 Q5.700,43 5.700,46.600 Q2.200,44.600 3,42 Q3.700,40 5.500,39.100Z" fill="#2f62a8"/></g></svg></div><div class="lb"><span style="letter-spacing:0.257px">Microsoft</span><br><span style="letter-spacing:-0.508px">Edge</span></div></div>
<div class="di" style="left:75px;top:392px"><div class="ic"><svg viewBox="0 0 48 48"><rect width="48" height="48" fill="#8a7f00"/><g><rect x="0.500" y="35.500" width="12" height="12" fill="#fbfbfb" stroke="#d4c9c9" stroke-width="1"/><path d="M3.800,37.300 H9.900 V43.300 L8.200,41.600 Q5.700,43 5.700,46.600 Q2.200,44.600 3,42 Q3.700,40 5.500,39.100Z" fill="#2f62a8"/></g></svg></div><div class="lb"><span style="letter-spacing:-0.396px">Banana</span></div></div>
<div class="di" style="left:150px;top:392px"><div class="ic"><svg viewBox="0 0 48 48"><defs><linearGradient id="g25" x1="0" y1="0" x2="1" y2="1"><stop offset="0" stop-color="#fdfdfd"/><stop offset="1" stop-color="#eeeff2"/></linearGradient><linearGradient id="g26" x1="0" y1="0" x2="1" y2="1"><stop offset="0" stop-color="#f4f4f4"/><stop offset="1" stop-color="#d9d9dc"/></linearGradient></defs><path d="M8.500,3.500 H31.500 L39.500,11.500 V44.500 H8.500Z" fill="url(#g25)" stroke="#a09c9c" stroke-width="1"/><path d="M31.500,3.500 V11.500 H39.500Z" fill="url(#g26)" stroke="#a09c9c" stroke-width=".8" stroke-linejoin="round"/></svg></div><div class="lb"><span style="letter-spacing:-0.034px">drrrr.ansi</span></div></div>
<div class="di" style="left:225px;top:392px"><div class="ic"><svg viewBox="0 0 48 48"><defs><linearGradient id="g27" x1="0" y1=".2" x2="1" y2=".5"><stop offset="0" stop-color="#3cb4f2"/><stop offset=".5" stop-color="#2fc3c6"/><stop offset=".78" stop-color="#4fd08a"/><stop offset="1" stop-color="#86e63c"/></linearGradient><linearGradient id="g28" x1="0" y1="0" x2="0" y2="1"><stop offset="0" stop-color="#1a8ddc"/><stop offset="1" stop-color="#1372cf"/></linearGradient><linearGradient id="g29" x1="0" y1="0" x2="1" y2="1"><stop offset="0" stop-color="#0f63b4"/><stop offset="1" stop-color="#11509a"/></linearGradient></defs><path d="M0.200,21 C1.500,8 12,0 24.500,0 C38,0 48,10 48,22 C48,29 42,32 36,31.800 C30,31.500 27,29 29,26 C31,23 29.500,18.500 25,16 C17,12 5,14 0.200,24Z" fill="url(#g27)"/><path d="M0.200,21 C-1.500,36 9,48 24,48 C28,48 31,47.500 33,46.500 C22,46 13.500,38 14,28 C14.300,21 20,15.800 26,16.200 C18,11.500 4,12 0.200,21Z" fill="url(#g28)"/><path d="M26,16.200 C19,15.500 13.500,22 14,29 C14.500,40 24,47.500 34,46.500 C39,45 43,41 44.500,36 C38,40.500 28,40 23.500,33.500 C20,28 21.500,21.500 27,19.500 C27,18 26.700,17 26,16.200Z" fill="url(#g29)"/></svg></div><div class="lb"><span style="letter-spacing:-0.145px">Gravity</span><br><span style="letter-spacing:-0.169px">Hammer</span></div></div>
<div class="di" style="left:0px;top:490px"><div class="ic"><svg viewBox="0 0 48 48"><defs><radialGradient id="g30" cx=".4" cy=".35" r=".8"><stop offset="0" stop-color="#f04040"/><stop offset="1" stop-color="#b81418"/></radialGradient></defs><text x="1.500" y="31.500" font-size="28.500" font-weight="bold" fill="#231f20" stroke="#231f20" stroke-width="2.200" font-family="Liberation Sans, sans-serif" textLength="44" lengthAdjust="spacingAndGlyphs">NCH</text><path d="M31,13 A12,12 0 1 0 31,29 L27,25 A6.500,7 0 1 1 27,17Z" fill="url(#g30)" stroke="#231f20" stroke-width="0"/><circle cx="23" cy="21" r="12.500" fill="none" stroke="none"/><text x="13" y="41" font-size="6.800" fill="#16202a" font-family="Liberation Sans, sans-serif" font-weight="bold">Software</text><g><rect x="0.500" y="35.500" width="12" height="12" fill="#fbfbfb" stroke="#d4c9c9" stroke-width="1"/><path d="M3.800,37.300 H9.900 V43.300 L8.200,41.600 Q5.700,43 5.700,46.600 Q2.200,44.600 3,42 Q3.700,40 5.500,39.100Z" fill="#2f62a8"/></g></svg></div><div class="lb"><span style="letter-spacing:-0.299px">NCH Suite</span></div></div>
<div class="di" style="left:75px;top:490px"><div class="ic"><svg viewBox="0 0 48 48"><path d="M9,34 L31,14 M17,16 H31 M24,7.500 L33,15" stroke="#ea7a0a" stroke-width="5" stroke-linecap="round" fill="none"/><ellipse cx="33" cy="27" rx="14" ry="13" fill="#ea7a0a"/><ellipse cx="34" cy="26.500" rx="9.300" ry="8.600" fill="#fff"/><ellipse cx="34.500" cy="26.500" rx="5.600" ry="5.300" fill="#2a5a8e"/><g><rect x="0.500" y="35.500" width="12" height="12" fill="#fbfbfb" stroke="#d4c9c9" stroke-width="1"/><path d="M3.800,37.300 H9.900 V43.300 L8.200,41.600 Q5.700,43 5.700,46.600 Q2.200,44.600 3,42 Q3.700,40 5.500,39.100Z" fill="#2f62a8"/></g></svg></div><div class="lb"><span style="letter-spacing:-0.308px">Blender 4.2</span></div></div>
<div class="di" style="left:150px;top:490px"><div class="ic"><svg viewBox="0 0 48 48"><defs><linearGradient id="g31" x1="0" y1="0" x2="1" y2="1"><stop offset="0" stop-color="#1e84e2"/><stop offset=".5" stop-color="#0074d9"/><stop offset="1" stop-color="#0070d6"/></linearGradient></defs><rect x="3.700" y="8.700" width="40.500" height="29.500" fill="#f3f3f3" stroke="#a39d9a" stroke-width="1"/><rect x="3.200" y="8.200" width="41.500" height="2.600" fill="#8f8f8f"/><rect x="36" y="9" width="1.900" height="1.200" fill="#e8e8e8"/><rect x="39.100" y="9" width="1.900" height="1.200" fill="#e8e8e8"/><rect x="42.100" y="9" width="1.900" height="1.200" fill="#e8e8e8"/><rect x="4.200" y="12.800" width="7.800" height="24.900" fill="#e9e9e9"/><rect x="12" y="12.800" width="19" height="24" fill="#fcfcfc"/><rect x="13.100" y="14" width="16.900" height="20.900" fill="url(#g31)"/><path d="M5,15.5 h1 M7,15.5 h4 M5,18.5 h1 M7,18.5 h4 M5,21.5 h1 M7,21.5 h4 M5,24.5 h1 M7,24.5 h4 M5,27.5 h1 M7,27.5 h4 " stroke="#8c8c8c" stroke-width="1"/><path d="M32.100,15.5 h9.8 M32.100,17.5 h9.8 M32.100,19.5 h9.8 M32.100,21.5 h9.8 M32.100,23.5 h9.8 M32.100,25.5 h9.8 M32.100,27.5 h9.8 M32.100,29.5 h5.8 " stroke="#8e8e8e" stroke-width="1"/></svg></div><div class="lb"><span style="letter-spacing:0.066px">drrrr</span></div></div>
<div class="di" style="left:225px;top:490px"><div class="ic"><svg viewBox="0 0 48 48"><path d="M11.500,3 H30.800 L43,15 V41 Q43,45 39,45 H11 Q7,45 7,41 V7 Q7,3 11.500,3Z" fill="#fbf8f5"/><path d="M0.300,39.200 L8.600,30.900 L16,38 L23.400,30.900 L31.700,39.200 L23.400,47.700 L19.500,44 L16,46.800 L12.500,44 L8.600,47.700Z" fill="#fbf8f5"/><circle cx="16" cy="39.200" r="7.600" fill="#fbf8f5"/><path d="M14,7.500 H29.300 L38.250,16.500 V38.500 Q38.250,41.450 35.300,41.450 H14 Q11.350,41.450 11.350,38.500 V10.500 Q11.350,7.500 14,7.500Z" fill="#f0f0f1" stroke="#3f3f3f" stroke-width="2.900" stroke-linejoin="round"/><path d="M28.900,6.100 L39.700,16.900 V17.800 H30.900 Q28.900,17.800 28.900,15.800Z" fill="#3f3f3f"/><path d="M0.300,39.200 L8.600,30.900 L16.900,39.200 L8.600,47.700Z M15.100,39.200 L23.400,30.900 L31.700,39.200 L23.400,47.700Z" fill="#fbf8f5"/><circle cx="16" cy="39.200" r="7.600" fill="#fbf8f5"/><path d="M9.800,34.800 L5.200,39.200 L9.800,43.600" fill="none" stroke="#3f3f3f" stroke-width="2.300"/><path d="M22.200,34.800 L26.800,39.200 L22.200,43.600" fill="none" stroke="#3f3f3f" stroke-width="2.300"/><circle cx="16" cy="39.200" r="4.600" fill="#0a93d8"/></svg></div><div class="lb"><span style="letter-spacing:0.025px">idk executor</span><br><span style="letter-spacing:-0.265px">version 0.1...</span></div></div>
<div class="di" style="left:300px;top:490px"><div class="ic"><svg viewBox="0 0 48 48"><rect x="3.700" y="7.700" width="40.500" height="29.500" fill="#fafafa" stroke="#a39d9a" stroke-width="1"/><rect x="3.200" y="7.200" width="41.500" height="2.600" fill="#8a8a8a"/><rect x="36" y="8" width="1.900" height="1.200" fill="#e8e8e8"/><rect x="39.100" y="8" width="1.900" height="1.200" fill="#e8e8e8"/><rect x="42.100" y="8" width="1.900" height="1.200" fill="#e8e8e8"/><polygon points="25.70,20.20 27.76,21.03 27.59,22.07 25.37,22.20 25.08,22.93 26.57,24.57 25.97,25.44 23.91,24.59 23.33,25.13 23.96,27.25 23.04,27.77 21.56,26.12 20.80,26.34 20.45,28.53 19.40,28.60 18.78,26.47 18.00,26.34 16.73,28.17 15.76,27.77 16.12,25.58 15.47,25.13 13.54,26.22 12.83,25.44 14.11,23.62 13.72,22.93 11.51,23.08 11.21,22.07 13.15,20.99 13.10,20.20 11.04,19.37 11.21,18.33 13.43,18.20 13.72,17.47 12.23,15.83 12.83,14.96 14.89,15.81 15.47,15.27 14.84,13.15 15.76,12.63 17.24,14.28 18.00,14.06 18.35,11.87 19.40,11.80 20.02,13.93 20.80,14.06 22.07,12.23 23.04,12.63 22.68,14.82 23.33,15.27 25.26,14.18 25.97,14.96 24.69,16.78 25.08,17.47 27.29,17.32 27.59,18.33 25.65,19.41" fill="#dadfe4" stroke="#8f949a" stroke-width=".7" stroke-linejoin="round"/><circle cx="19.4" cy="20.2" r="3" fill="#fafafa" stroke="#8f949a" stroke-width=".7"/><polygon points="34.80,30.73 36.20,32.07 35.65,33.03 33.79,32.48 33.20,33.00 33.54,34.92 32.53,35.36 31.35,33.82 30.56,33.90 29.72,35.65 28.64,35.42 28.59,33.47 27.91,33.08 26.19,34.00 25.46,33.17 26.56,31.57 26.24,30.85 24.31,30.59 24.20,29.49 26.03,28.84 26.20,28.07 24.80,26.73 25.35,25.77 27.21,26.32 27.80,25.80 27.46,23.88 28.47,23.44 29.65,24.98 30.44,24.90 31.28,23.15 32.36,23.38 32.41,25.33 33.09,25.72 34.81,24.80 35.54,25.63 34.44,27.23 34.76,27.95 36.69,28.21 36.80,29.31 34.97,29.96" fill="#dadfe4" stroke="#8f949a" stroke-width=".7" stroke-linejoin="round"/><circle cx="30.5" cy="29.4" r="1.5" fill="#fafafa" stroke="#8f949a" stroke-width=".7"/></svg></div><div class="lb"><span style="letter-spacing:0.312px">q</span></div></div>
<div class="di" style="left:0px;top:588px"><div class="ic"><svg viewBox="0 0 48 48"><defs><linearGradient id="g32" x1="0" y1="0" x2="0" y2="1"><stop offset="0" stop-color="#17193f"/><stop offset=".55" stop-color="#1a3f7a"/><stop offset="1" stop-color="#1c7fc0"/></linearGradient></defs><circle cx="24" cy="25" r="23" fill="url(#g32)"/><path d="M1,22 L16,28.500 Q19,27 22,28 L28,20 L36,24 L24,33 Q23,39 17,39 Q12,39 11,34 L1.500,30Z" fill="#fff"/><circle cx="32" cy="17" r="8" fill="#fff"/><circle cx="32" cy="17" r="5.600" fill="#1b2b5e"/><circle cx="32" cy="17" r="4" fill="#fff"/><circle cx="17" cy="33" r="4.600" fill="#fff" stroke="#1a3f7a" stroke-width="1.300"/><g><rect x="0.500" y="35.500" width="12" height="12" fill="#fbfbfb" stroke="#d4c9c9" stroke-width="1"/><path d="M3.800,37.300 H9.900 V43.300 L8.200,41.600 Q5.700,43 5.700,46.600 Q2.200,44.600 3,42 Q3.700,40 5.500,39.100Z" fill="#2f62a8"/></g></svg></div><div class="lb"><span style="letter-spacing:-0.537px">Steam</span></div></div>
<div class="di" style="left:75px;top:588px"><div class="ic"><svg viewBox="0 0 48 48"><rect x="34.0" y="19.4" width="8" height="7.200" rx="1.200" fill="#0a1f2c" transform="rotate(-62.0 20 23)"/><rect x="34.0" y="19.4" width="8" height="7.200" rx="1.200" fill="#0a1f2c" transform="rotate(-98.5 20 23)"/><rect x="34.0" y="19.4" width="8" height="7.200" rx="1.200" fill="#0a1f2c" transform="rotate(-135.0 20 23)"/><rect x="34.0" y="19.4" width="8" height="7.200" rx="1.200" fill="#0a1f2c" transform="rotate(-171.5 20 23)"/><rect x="34.0" y="19.4" width="8" height="7.200" rx="1.200" fill="#0a1f2c" transform="rotate(-208.0 20 23)"/><rect x="34.0" y="19.4" width="8" height="7.200" rx="1.200" fill="#0a1f2c" transform="rotate(-244.5 20 23)"/><rect x="34.0" y="19.4" width="8" height="7.200" rx="1.200" fill="#0a1f2c" transform="rotate(-281.0 20 23)"/><rect x="34.0" y="19.4" width="8" height="7.200" rx="1.200" fill="#0a1f2c" transform="rotate(-317.5 20 23)"/><rect x="34.0" y="19.4" width="8" height="7.200" rx="1.200" fill="#0a1f2c" transform="rotate(-354.0 20 23)"/><path d="M29.600,12.800 A14,14 0 1 0 27.500,34.800" fill="none" stroke="#0a1f2c" stroke-width="9"/><path d="M29.600,12.800 A14,14 0 1 0 27.500,34.800" fill="none" stroke="#1d6a96" stroke-width="3.500" opacity=".8"/><path d="M9,23.500 Q20,17.500 33,22.500 Q20,23.500 10,27Z" fill="#0a1f2c"/><path d="M27.500,27.500 Q33.500,26.500 36.500,23.500 Q39.500,26.500 45.500,27.500 Q45.500,41 36.500,46 Q27.500,41 27.500,27.500Z" fill="#ececec"/><path d="M29,28.700 Q33.500,27.700 36.500,25.500 V35.500 H29.400Z" fill="#1b74d4"/><path d="M36.500,25.500 Q39.500,27.700 44,28.700 L43.600,35.500 H36.500Z" fill="#fdb827"/><path d="M29.400,35.500 H36.500 V44.400 Q30.600,41 29.400,35.500Z" fill="#fdb827"/><path d="M36.500,35.500 H43.600 Q42.400,41 36.500,44.400Z" fill="#1b74d4"/><g><rect x="0.500" y="35.500" width="12" height="12" fill="#fbfbfb" stroke="#d4c9c9" stroke-width="1"/><path d="M3.800,37.300 H9.900 V43.300 L8.200,41.600 Q5.700,43 5.700,46.600 Q2.200,44.600 3,42 Q3.700,40 5.500,39.100Z" fill="#2f62a8"/></g></svg></div><div class="lb"><span style="letter-spacing:-0.311px">Cheat Engine</span></div></div>
<div class="di" style="left:150px;top:588px"><div class="ic"><svg viewBox="0 0 48 48"><path d="M11.500,3 H30.800 L43,15 V41 Q43,45 39,45 H11 Q7,45 7,41 V7 Q7,3 11.500,3Z" fill="#fbf8f5"/><path d="M0.300,39.200 L8.600,30.900 L16,38 L23.400,30.900 L31.700,39.200 L23.400,47.700 L19.500,44 L16,46.800 L12.500,44 L8.600,47.700Z" fill="#fbf8f5"/><circle cx="16" cy="39.200" r="7.600" fill="#fbf8f5"/><path d="M14,7.500 H29.300 L38.250,16.500 V38.500 Q38.250,41.450 35.300,41.450 H14 Q11.350,41.450 11.350,38.500 V10.500 Q11.350,7.500 14,7.500Z" fill="#f0f0f1" stroke="#3f3f3f" stroke-width="2.900" stroke-linejoin="round"/><path d="M28.900,6.100 L39.700,16.900 V17.800 H30.900 Q28.900,17.800 28.900,15.800Z" fill="#3f3f3f"/><path d="M0.300,39.200 L8.600,30.900 L16.900,39.200 L8.600,47.700Z M15.100,39.200 L23.400,30.900 L31.700,39.200 L23.400,47.700Z" fill="#fbf8f5"/><circle cx="16" cy="39.200" r="7.600" fill="#fbf8f5"/><path d="M9.800,34.800 L5.200,39.200 L9.800,43.600" fill="none" stroke="#3f3f3f" stroke-width="2.300"/><path d="M22.200,34.800 L26.800,39.200 L22.200,43.600" fill="none" stroke="#3f3f3f" stroke-width="2.300"/><circle cx="16" cy="39.200" r="4.600" fill="#0a93d8"/></svg></div><div class="lb"><span style="letter-spacing:0.109px">drrrr.hta</span></div></div>
<div class="di" style="left:225px;top:588px"><div class="ic"><svg viewBox="0 0 48 48"><defs><linearGradient id="g33" x1="0" y1="0" x2="1" y2="1"><stop offset="0" stop-color="#f7f7f7"/><stop offset="1" stop-color="#dcdcdc"/></linearGradient></defs><path d="M8.500,3.500 H31.500 L39.500,11.500 V44.500 H8.500Z" fill="#fff" stroke="#a89d98" stroke-width="1"/><path d="M31.500,3.500 V11.500 H39.500Z" fill="url(#g33)" stroke="#a8a3a0" stroke-width=".8" stroke-linejoin="round"/><path d="M31.800,12 H39" stroke="#8d8d8d" stroke-width=".7" opacity=".7"/><path d="M11,7.5 H29.9 M11,10.5 H29.9 M11,13.5 H36.9 M11,16.5 H36.9 M11,19.5 H36.9 M11,22.5 H36.9 M11,25.5 H36.9 M11,28.5 H36.9 M11,31.5 H36.9 M11,34.5 H36.9 M11,37.5 H36.9 M11,40.5 H36.9 " stroke="#a4a4a4" stroke-width="1.050" fill="none"/></svg></div><div class="lb"><span style="letter-spacing:0.025px">idk executor</span><br><span style="letter-spacing:-0.265px">version 0.1...</span></div></div>
<div class="di" style="left:300px;top:588px"><div class="ic"><svg viewBox="0 0 48 48"><defs><linearGradient id="g34" x1="0" y1="0" x2="1" y2="1"><stop offset="0" stop-color="#1e84e2"/><stop offset=".5" stop-color="#0074d9"/><stop offset="1" stop-color="#0070d6"/></linearGradient></defs><rect x="3.700" y="8.700" width="40.500" height="29.500" fill="#f3f3f3" stroke="#a39d9a" stroke-width="1"/><rect x="3.200" y="8.200" width="41.500" height="2.600" fill="#8f8f8f"/><rect x="36" y="9" width="1.900" height="1.200" fill="#e8e8e8"/><rect x="39.100" y="9" width="1.900" height="1.200" fill="#e8e8e8"/><rect x="42.100" y="9" width="1.900" height="1.200" fill="#e8e8e8"/><rect x="4.200" y="12.800" width="7.800" height="24.900" fill="#e9e9e9"/><rect x="12" y="12.800" width="19" height="24" fill="#fcfcfc"/><rect x="13.100" y="14" width="16.900" height="20.900" fill="url(#g34)"/><path d="M5,15.5 h1 M7,15.5 h4 M5,18.5 h1 M7,18.5 h4 M5,21.5 h1 M7,21.5 h4 M5,24.5 h1 M7,24.5 h4 M5,27.5 h1 M7,27.5 h4 " stroke="#8c8c8c" stroke-width="1"/><path d="M32.100,15.5 h9.8 M32.100,17.5 h9.8 M32.100,19.5 h9.8 M32.100,21.5 h9.8 M32.100,23.5 h9.8 M32.100,25.5 h9.8 M32.100,27.5 h9.8 M32.100,29.5 h5.8 " stroke="#8e8e8e" stroke-width="1"/></svg></div><div class="lb"><span style="letter-spacing:0.312px">q</span></div></div>
<div class="di" style="left:750px;top:588px"><div class="ic"><svg viewBox="0 0 48 48"><defs><linearGradient id="g35" x1="0" y1="0" x2="1" y2="0"><stop offset="0" stop-color="#e9c25f"/><stop offset=".35" stop-color="#f2d073"/><stop offset="1" stop-color="#fde08a"/></linearGradient><linearGradient id="g36" x1="0" y1="0" x2="0" y2="1"><stop offset="0" stop-color="#feeaa8"/><stop offset="1" stop-color="#fbdc86"/></linearGradient></defs><path d="M8.300,5 H33.200 V25.700 L35.200,27.800 V39 H8.300Z" fill="url(#g35)"/><rect x="16.500" y="38" width="18.700" height="1" fill="#ffd25e"/><path d="M14.350,7.550 L38.900,10.700 V43.700 L17,40.500Z" fill="#f8f8f9"/><path d="M18.800,10 L31.200,11.500 L34.900,16 V41.300 L18.800,39.300Z" fill="#ebebec" stroke="#f4f4f4" stroke-width=".6"/><path d="M31.200,11.500 L31.600,15.600 L34.900,16Z" fill="#dcdcdc"/><path d="M34.900,16 V41.300 L18.800,39.300" fill="none" stroke="#cfe3f2" stroke-width=".7"/><path d="M18.800,10 L31.200,11.500" fill="none" stroke="#f0e3b8" stroke-width=".6"/><path d="M8.300,5 L17.500,12.300 V34 H16.700 V45.600 L8.300,39.400Z" fill="url(#g36)"/></svg></div><div class="lb"><span style="letter-spacing:0.152px">interbounty(d0x</span><br><span style="letter-spacing:-0.069px">t00l)</span></div></div>
<div class="di" style="left:1050px;top:588px"><div class="ic"><svg viewBox="0 0 48 48"><defs><linearGradient id="g37" x1="0" y1="0" x2="1" y2="0"><stop offset="0" stop-color="#e9c25f"/><stop offset=".35" stop-color="#f2d073"/><stop offset="1" stop-color="#fde08a"/></linearGradient><linearGradient id="g38" x1="0" y1="0" x2="0" y2="1"><stop offset="0" stop-color="#feeaa8"/><stop offset="1" stop-color="#fbdc86"/></linearGradient></defs><path d="M8.300,5 H33.200 V25.700 L35.200,27.800 V39 H8.300Z" fill="url(#g37)"/><rect x="16.500" y="38" width="18.700" height="1" fill="#ffd25e"/><path d="M14.350,7.550 L38.900,10.700 V43.700 L17,40.500Z" fill="#f8f8f9"/><path d="M18.800,10 L31.200,11.500 L34.900,16 V41.300 L18.800,39.300Z" fill="#ebebec" stroke="#f4f4f4" stroke-width=".6"/><path d="M31.200,11.500 L31.600,15.600 L34.900,16Z" fill="#dcdcdc"/><path d="M34.900,16 V41.300 L18.800,39.300" fill="none" stroke="#cfe3f2" stroke-width=".7"/><path d="M18.800,10 L31.200,11.500" fill="none" stroke="#f0e3b8" stroke-width=".6"/><path d="M8.300,5 L17.500,12.300 V34 H16.700 V45.600 L8.300,39.400Z" fill="url(#g38)"/></svg></div><div class="lb"><span style="letter-spacing:-0.224px">RedTiger-T...</span></div></div>
<div class="di" style="left:0px;top:686px"><div class="ic"><svg viewBox="0 0 48 48"><defs><linearGradient id="g39" x1="0" y1="0" x2="0" y2="1"><stop offset="0" stop-color="#5a7a70"/><stop offset=".3" stop-color="#163c3a"/><stop offset=".6" stop-color="#0d3433"/><stop offset="1" stop-color="#06201f"/></linearGradient></defs><rect x="0.500" y="0.500" width="47" height="47" fill="url(#g39)" stroke="#e8eef0" stroke-width="1"/><path d="M8,9 H18 L24.500,30 L31,9 H38 L27,41 H20Z" fill="#f4f4f2"/><g><rect x="0.500" y="35.500" width="12" height="12" fill="#fbfbfb" stroke="#d4c9c9" stroke-width="1"/><path d="M3.800,37.300 H9.900 V43.300 L8.200,41.600 Q5.700,43 5.700,46.600 Q2.200,44.600 3,42 Q3.700,40 5.500,39.100Z" fill="#2f62a8"/></g></svg></div><div class="lb"><span style="letter-spacing:-0.095px">Voxal Voice</span><br><span style="letter-spacing:-0.29px">Changer</span></div></div>
<div class="di" style="left:75px;top:686px"><div class="ic"><svg viewBox="0 0 48 48"><path d="M11.500,3 H30.800 L43,15 V41 Q43,45 39,45 H11 Q7,45 7,41 V7 Q7,3 11.500,3Z" fill="#fbf8f5"/><path d="M0.300,39.200 L8.600,30.900 L16,38 L23.400,30.900 L31.700,39.200 L23.400,47.700 L19.500,44 L16,46.800 L12.500,44 L8.600,47.700Z" fill="#fbf8f5"/><circle cx="16" cy="39.200" r="7.600" fill="#fbf8f5"/><path d="M14,7.500 H29.300 L38.250,16.500 V38.500 Q38.250,41.450 35.300,41.450 H14 Q11.350,41.450 11.350,38.500 V10.500 Q11.350,7.500 14,7.500Z" fill="#f0f0f1" stroke="#3f3f3f" stroke-width="2.900" stroke-linejoin="round"/><path d="M28.900,6.100 L39.700,16.900 V17.800 H30.900 Q28.900,17.800 28.900,15.800Z" fill="#3f3f3f"/><path d="M0.300,39.200 L8.600,30.900 L16.900,39.200 L8.600,47.700Z M15.100,39.200 L23.400,30.900 L31.700,39.200 L23.400,47.700Z" fill="#fbf8f5"/><circle cx="16" cy="39.200" r="7.600" fill="#fbf8f5"/><path d="M9.800,34.800 L5.200,39.200 L9.800,43.600" fill="none" stroke="#3f3f3f" stroke-width="2.300"/><path d="M22.200,34.800 L26.800,39.200 L22.200,43.600" fill="none" stroke="#3f3f3f" stroke-width="2.300"/><circle cx="16" cy="39.200" r="4.600" fill="#0a93d8"/></svg></div><div class="lb"><span style="letter-spacing:0.059px">d.hta</span></div></div>
<div class="di" style="left:150px;top:686px"><div class="ic"><svg viewBox="0 0 48 48"><rect x="3.700" y="7.700" width="40.500" height="29.500" fill="#fafafa" stroke="#a39d9a" stroke-width="1"/><rect x="3.200" y="7.200" width="41.500" height="2.600" fill="#8a8a8a"/><rect x="36" y="8" width="1.900" height="1.200" fill="#e8e8e8"/><rect x="39.100" y="8" width="1.900" height="1.200" fill="#e8e8e8"/><rect x="42.100" y="8" width="1.900" height="1.200" fill="#e8e8e8"/><polygon points="25.70,20.20 27.76,21.03 27.59,22.07 25.37,22.20 25.08,22.93 26.57,24.57 25.97,25.44 23.91,24.59 23.33,25.13 23.96,27.25 23.04,27.77 21.56,26.12 20.80,26.34 20.45,28.53 19.40,28.60 18.78,26.47 18.00,26.34 16.73,28.17 15.76,27.77 16.12,25.58 15.47,25.13 13.54,26.22 12.83,25.44 14.11,23.62 13.72,22.93 11.51,23.08 11.21,22.07 13.15,20.99 13.10,20.20 11.04,19.37 11.21,18.33 13.43,18.20 13.72,17.47 12.23,15.83 12.83,14.96 14.89,15.81 15.47,15.27 14.84,13.15 15.76,12.63 17.24,14.28 18.00,14.06 18.35,11.87 19.40,11.80 20.02,13.93 20.80,14.06 22.07,12.23 23.04,12.63 22.68,14.82 23.33,15.27 25.26,14.18 25.97,14.96 24.69,16.78 25.08,17.47 27.29,17.32 27.59,18.33 25.65,19.41" fill="#dadfe4" stroke="#8f949a" stroke-width=".7" stroke-linejoin="round"/><circle cx="19.4" cy="20.2" r="3" fill="#fafafa" stroke="#8f949a" stroke-width=".7"/><polygon points="34.80,30.73 36.20,32.07 35.65,33.03 33.79,32.48 33.20,33.00 33.54,34.92 32.53,35.36 31.35,33.82 30.56,33.90 29.72,35.65 28.64,35.42 28.59,33.47 27.91,33.08 26.19,34.00 25.46,33.17 26.56,31.57 26.24,30.85 24.31,30.59 24.20,29.49 26.03,28.84 26.20,28.07 24.80,26.73 25.35,25.77 27.21,26.32 27.80,25.80 27.46,23.88 28.47,23.44 29.65,24.98 30.44,24.90 31.28,23.15 32.36,23.38 32.41,25.33 33.09,25.72 34.81,24.80 35.54,25.63 34.44,27.23 34.76,27.95 36.69,28.21 36.80,29.31 34.97,29.96" fill="#dadfe4" stroke="#8f949a" stroke-width=".7" stroke-linejoin="round"/><circle cx="30.5" cy="29.4" r="1.5" fill="#fafafa" stroke="#8f949a" stroke-width=".7"/></svg></div><div class="lb"><span style="letter-spacing:-0.155px">DudeWhat...</span></div></div>
<div class="di" style="left:225px;top:686px"><div class="ic"><svg viewBox="0 0 48 48"><rect x="3.700" y="7.700" width="40.500" height="29.500" fill="#fafafa" stroke="#a39d9a" stroke-width="1"/><rect x="3.200" y="7.200" width="41.500" height="2.600" fill="#8a8a8a"/><rect x="36" y="8" width="1.900" height="1.200" fill="#e8e8e8"/><rect x="39.100" y="8" width="1.900" height="1.200" fill="#e8e8e8"/><rect x="42.100" y="8" width="1.900" height="1.200" fill="#e8e8e8"/><polygon points="25.70,20.20 27.76,21.03 27.59,22.07 25.37,22.20 25.08,22.93 26.57,24.57 25.97,25.44 23.91,24.59 23.33,25.13 23.96,27.25 23.04,27.77 21.56,26.12 20.80,26.34 20.45,28.53 19.40,28.60 18.78,26.47 18.00,26.34 16.73,28.17 15.76,27.77 16.12,25.58 15.47,25.13 13.54,26.22 12.83,25.44 14.11,23.62 13.72,22.93 11.51,23.08 11.21,22.07 13.15,20.99 13.10,20.20 11.04,19.37 11.21,18.33 13.43,18.20 13.72,17.47 12.23,15.83 12.83,14.96 14.89,15.81 15.47,15.27 14.84,13.15 15.76,12.63 17.24,14.28 18.00,14.06 18.35,11.87 19.40,11.80 20.02,13.93 20.80,14.06 22.07,12.23 23.04,12.63 22.68,14.82 23.33,15.27 25.26,14.18 25.97,14.96 24.69,16.78 25.08,17.47 27.29,17.32 27.59,18.33 25.65,19.41" fill="#dadfe4" stroke="#8f949a" stroke-width=".7" stroke-linejoin="round"/><circle cx="19.4" cy="20.2" r="3" fill="#fafafa" stroke="#8f949a" stroke-width=".7"/><polygon points="34.80,30.73 36.20,32.07 35.65,33.03 33.79,32.48 33.20,33.00 33.54,34.92 32.53,35.36 31.35,33.82 30.56,33.90 29.72,35.65 28.64,35.42 28.59,33.47 27.91,33.08 26.19,34.00 25.46,33.17 26.56,31.57 26.24,30.85 24.31,30.59 24.20,29.49 26.03,28.84 26.20,28.07 24.80,26.73 25.35,25.77 27.21,26.32 27.80,25.80 27.46,23.88 28.47,23.44 29.65,24.98 30.44,24.90 31.28,23.15 32.36,23.38 32.41,25.33 33.09,25.72 34.81,24.80 35.54,25.63 34.44,27.23 34.76,27.95 36.69,28.21 36.80,29.31 34.97,29.96" fill="#dadfe4" stroke="#8f949a" stroke-width=".7" stroke-linejoin="round"/><circle cx="30.5" cy="29.4" r="1.5" fill="#fafafa" stroke="#8f949a" stroke-width=".7"/></svg></div><div class="lb"><span style="letter-spacing:-0.336px">iexpress</span></div></div>
<div class="di" style="left:300px;top:686px"><div class="ic"><svg viewBox="0 0 48 48"><defs><linearGradient id="g40" x1=".1" y1="0" x2=".8" y2="1"><stop offset="0" stop-color="#3f7aff"/><stop offset=".5" stop-color="#2a8bff"/><stop offset="1" stop-color="#08a2ff"/></linearGradient></defs><path d="M24,0 C42,0 48,6 48,24 C48,42 42,48 24,48 C6,48 0,42 0,24 C0,6 6,0 24,0Z" fill="url(#g40)"/><rect x="12" y="9.900" width="29.800" height="23.500" rx="7" fill="#9ccdfc"/><rect x="7" y="14.100" width="30.100" height="24" rx="7" fill="#fff"/><path d="M13.300,29.200 L17.700,22.300 M21.400,29.200 L25.300,22.300" stroke="#2f84ff" stroke-width="5.200" stroke-linecap="round"/><circle cx="30" cy="29.200" r="3.300" fill="#1e96ff"/><g><rect x="0.500" y="35.500" width="12" height="12" fill="#fbfbfb" stroke="#d4c9c9" stroke-width="1"/><path d="M3.800,37.300 H9.900 V43.300 L8.200,41.600 Q5.700,43 5.700,46.600 Q2.200,44.600 3,42 Q3.700,40 5.500,39.100Z" fill="#2f62a8"/></g></svg></div><div class="lb"><span style="letter-spacing:0.664px">MuMu</span><br><span style="letter-spacing:0.1px">MultiPlay...</span></div></div>
<div class="di" style="left:375px;top:686px"><div class="ic"><svg viewBox="0 0 48 48"><defs><linearGradient id="g41" x1="0" y1="0" x2="1" y2="1"><stop offset="0" stop-color="#f7f7f7"/><stop offset="1" stop-color="#dcdcdc"/></linearGradient></defs><path d="M8.500,3.500 H31.500 L39.500,11.500 V44.500 H8.500Z" fill="#fff" stroke="#a89d98" stroke-width="1"/><path d="M31.500,3.500 V11.500 H39.500Z" fill="url(#g41)" stroke="#a8a3a0" stroke-width=".8" stroke-linejoin="round"/><path d="M31.800,12 H39" stroke="#8d8d8d" stroke-width=".7" opacity=".7"/><path d="M11,7.5 H29.9 M11,10.5 H29.9 M11,13.5 H36.9 M11,16.5 H36.9 M11,19.5 H36.9 M11,22.5 H36.9 M11,25.5 H36.9 M11,28.5 H36.9 M11,31.5 H36.9 M11,34.5 H36.9 M11,37.5 H36.9 M11,40.5 H36.9 " stroke="#a4a4a4" stroke-width="1.050" fill="none"/></svg></div><div class="lb"><span style="letter-spacing:-0.406px">rc777</span></div></div>
<div class="di" style="left:450px;top:686px"><div class="ic"><svg viewBox="0 0 48 48"><path d="M11.500,3 H30.800 L43,15 V41 Q43,45 39,45 H11 Q7,45 7,41 V7 Q7,3 11.500,3Z" fill="#fbf8f5"/><path d="M0.300,39.200 L8.600,30.900 L16,38 L23.400,30.900 L31.700,39.200 L23.400,47.700 L19.500,44 L16,46.800 L12.500,44 L8.600,47.700Z" fill="#fbf8f5"/><circle cx="16" cy="39.200" r="7.600" fill="#fbf8f5"/><path d="M14,7.500 H29.300 L38.250,16.500 V38.500 Q38.250,41.450 35.300,41.450 H14 Q11.350,41.450 11.350,38.500 V10.500 Q11.350,7.500 14,7.500Z" fill="#f0f0f1" stroke="#3f3f3f" stroke-width="2.900" stroke-linejoin="round"/><path d="M28.900,6.100 L39.700,16.900 V17.800 H30.900 Q28.900,17.800 28.900,15.800Z" fill="#3f3f3f"/><path d="M0.300,39.200 L8.600,30.900 L16.900,39.200 L8.600,47.700Z M15.100,39.200 L23.400,30.900 L31.700,39.200 L23.400,47.700Z" fill="#fbf8f5"/><circle cx="16" cy="39.200" r="7.600" fill="#fbf8f5"/><path d="M9.800,34.800 L5.200,39.200 L9.800,43.600" fill="none" stroke="#3f3f3f" stroke-width="2.300"/><path d="M22.200,34.800 L26.800,39.200 L22.200,43.600" fill="none" stroke="#3f3f3f" stroke-width="2.300"/><circle cx="16" cy="39.200" r="4.600" fill="#0a93d8"/></svg></div><div class="lb"><span style="letter-spacing:0.219px">roblox</span><br><span style="letter-spacing:0.128px">logger.hta</span></div></div>
<div class="di" style="left:525px;top:686px"><div class="ic"><svg viewBox="0 0 48 48"><defs><linearGradient id="g42" x1="0" y1="0" x2="1" y2="1"><stop offset="0" stop-color="#f7f7f7"/><stop offset="1" stop-color="#dcdcdc"/></linearGradient></defs><path d="M8.500,3.500 H31.500 L39.500,11.500 V44.500 H8.500Z" fill="#fff" stroke="#a89d98" stroke-width="1"/><path d="M31.500,3.500 V11.500 H39.500Z" fill="url(#g42)" stroke="#a8a3a0" stroke-width=".8" stroke-linejoin="round"/><path d="M31.800,12 H39" stroke="#8d8d8d" stroke-width=".7" opacity=".7"/><path d="M11,7.5 H29.9 M11,10.5 H29.9 M11,13.5 H36.9 M11,16.5 H36.9 M11,19.5 H36.9 M11,22.5 H36.9 M11,25.5 H36.9 M11,28.5 H36.9 M11,31.5 H36.9 M11,34.5 H36.9 M11,37.5 H36.9 M11,40.5 H36.9 " stroke="#a4a4a4" stroke-width="1.050" fill="none"/></svg></div><div class="lb">smth</div></div>
<div class="di" style="left:600px;top:686px"><div class="ic"><svg viewBox="0 0 48 48"><defs><linearGradient id="g43" x1="0" y1="0" x2="0" y2="1"><stop offset="0" stop-color="#ffe100"/><stop offset=".45" stop-color="#ffd20a"/><stop offset="1" stop-color="#ffbf45"/></linearGradient></defs><path d="M2,8 Q2,6.800 3.900,6.800 L6.200,4.100 H19.700 L21.300,6.800 H46 V20 H2Z" fill="#ffc600"/><rect x="4.100" y="8.900" width="40" height="5" fill="#f4f4fb"/><path d="M0,14 Q0,12.800 1.500,12.800 H20.500 L22.300,10.200 H46.500 Q47.900,10.200 47.900,12 L46,39.500 Q46,40.800 44.500,40.800 H3.800 Q2.300,40.800 2.300,39.500Z" fill="url(#g43)"/><path d="M19.200,16 H29 Q30,16 30,17 V25 H35.500 Q36.800,25.200 36,26.300 L24.800,38.800 Q23.900,39.600 23,38.800 L12,26.300 Q11.300,25.200 12.500,25 H18.100 V17 Q18.100,16 19.200,16Z" fill="#10a00a"/><g><rect x="0.500" y="35.500" width="12" height="12" fill="#fbfbfb" stroke="#d4c9c9" stroke-width="1"/><path d="M3.800,37.300 H9.900 V43.300 L8.200,41.600 Q5.700,43 5.700,46.600 Q2.200,44.600 3,42 Q3.700,40 5.500,39.100Z" fill="#2f62a8"/></g></svg></div><div class="lb"><span style="letter-spacing:-0.169px">uFiler</span></div></div>
<div class="di" style="left:675px;top:686px"><div class="ic"><svg viewBox="0 0 48 48"><defs><linearGradient id="g44" x1="0" y1="0" x2="1" y2="0"><stop offset="0" stop-color="#5fb5aa"/><stop offset=".5" stop-color="#1f8178"/><stop offset="1" stop-color="#4fa89c"/></linearGradient><linearGradient id="g45" x1="0" y1="0" x2="0" y2="1"><stop offset="0" stop-color="#5ea2ee"/><stop offset=".5" stop-color="#cfe6f8"/><stop offset="1" stop-color="#9fc8e8"/></linearGradient></defs><path d="M8.800,6.200 H30.500 L40.600,15.500 V47 H8.800Z" fill="#0a4a80" opacity=".35"/><path d="M8.500,5.300 H30 L39.500,14.800 V46 H8.500Z" fill="#fdfdfd" stroke="#d9d2cc" stroke-width=".8"/><path d="M31.200,5.500 V13.600 H39.300" fill="#f4f4f4" stroke="#9a9a9a" stroke-width=".9" stroke-linejoin="round"/><path d="M30,5.300 L39.500,14.800" stroke="#2a4a6a" stroke-width=".8" opacity=".6"/><text x="12.300" y="18.900" font-size="10.500" font-style="italic" font-weight="bold" fill="#3a3af0" font-family="Liberation Serif, serif">A</text><path d="M23,14.400 h6 M23,16.500 h6 M23,18.500 h14" stroke="#a9a4f4" stroke-width="1"/><rect x="11" y="21" width="25" height="1.900" fill="url(#g44)"/><path d="M14,26.400 h22 M12,29.400 h10 M12,32.400 h10 M15,35.500 h7 M12,38.500 h10 M12,41.600 h24" stroke="#c6c6d2" stroke-width="1"/><rect x="24.200" y="28.100" width="11.800" height="10.800" fill="url(#g45)"/><path d="M24.200,33.500 q1,-2.500 3,-1 q3,2.500 8.800,2.300 v1.700 h-11.800z" fill="#4f8f55"/><rect x="24.200" y="35.700" width="11.800" height="3.200" fill="#4e7fb4"/></svg></div><div class="lb">Новый<br>документ в...</div></div>
<div class="di" style="left:750px;top:686px"><div class="ic"><svg viewBox="0 0 48 48"><defs><linearGradient id="g46" x1="0" y1="0" x2="1" y2="0"><stop offset="0" stop-color="#e9c25f"/><stop offset=".35" stop-color="#f2d073"/><stop offset="1" stop-color="#fde08a"/></linearGradient><linearGradient id="g47" x1="0" y1="0" x2="0" y2="1"><stop offset="0" stop-color="#feeaa8"/><stop offset="1" stop-color="#fbdc86"/></linearGradient></defs><path d="M8.300,5 H33.200 V25.700 L35.200,27.800 V39 H8.300Z" fill="url(#g46)"/><rect x="16.500" y="38" width="18.700" height="1" fill="#ffd25e"/><path d="M14.350,7.550 L38.900,10.700 V43.700 L17,40.500Z" fill="#f8f8f9"/><path d="M29,12.500 L31.600,12.800 L35,17 V41.500 L29,40.500Z" fill="#ededee"/><path d="M35,17 V41.500 L30.500,40.800" fill="none" stroke="#bcdcf2" stroke-width=".7"/><path d="M16,8.500 L30.200,12.500 V46.300 L16,41Z" fill="#fafafa"/><path d="M30.200,12.500 V46.300" stroke="#e6e8ea" stroke-width=".6"/><path d="M17.300,15.200 L28.900,19.400" stroke="#4e4e4e" stroke-width="1.300"/><circle cx="19.300" cy="24.200" r="3.200" fill="none" stroke="#c3c9d0" stroke-width="2.300" stroke-dasharray="1.500 .8"/><circle cx="19.300" cy="24.200" r="2.600" fill="none" stroke="#c3c9d0" stroke-width="1.400"/><circle cx="23.500" cy="32" r="2.400" fill="none" stroke="#b9c0c8" stroke-width="1.900" stroke-dasharray="1.200 .7"/><circle cx="23.500" cy="32" r="1.900" fill="none" stroke="#b9c0c8" stroke-width="1.100"/><path d="M17.300,36.500 L28.500,40.500" stroke="#f1dfa0" stroke-width=".7"/><path d="M8.300,5 L17.500,12.300 V34 H16.700 V45.600 L8.300,39.400Z" fill="url(#g47)"/></svg></div><div class="lb"><span style="letter-spacing:0.239px">interbounty</span><br><span style="letter-spacing:-0.116px">noscamapp</span></div></div>
<div class="di" style="left:825px;top:686px"><div class="ic"><svg viewBox="0 0 48 48"><defs><linearGradient id="g48" x1="0" y1="0" x2="0" y2="1"><stop offset="0" stop-color="#e2476a"/><stop offset=".55" stop-color="#c42550"/><stop offset="1" stop-color="#a3183d"/></linearGradient><linearGradient id="g49" x1="0" y1="0" x2="0" y2="1"><stop offset="0" stop-color="#6d6dee"/><stop offset=".55" stop-color="#4a43c6"/><stop offset="1" stop-color="#2f279c"/></linearGradient><linearGradient id="g50" x1="0" y1="0" x2="0" y2="1"><stop offset="0" stop-color="#2bc257"/><stop offset=".55" stop-color="#129436"/><stop offset="1" stop-color="#0a6f22"/></linearGradient><linearGradient id="g51" x1="0" y1="0" x2="0" y2="1"><stop offset="0" stop-color="#f0a822"/><stop offset=".5" stop-color="#e08a1c"/><stop offset="1" stop-color="#cf7416"/></linearGradient></defs><rect x="0.200" y="3.9" width="47.700" height="13.1" rx="2.500" fill="url(#g48)"/><rect x="3.900" y="6" width="3.100" height="8.9" fill="#ffc21a"/><rect x="0.200" y="17" width="47.700" height="12.7" rx="2.500" fill="url(#g49)"/><rect x="3.900" y="18.9" width="3.100" height="9" fill="#ffc21a"/><rect x="0.200" y="29.7" width="47.700" height="13.2" rx="2.500" fill="url(#g50)"/><rect x="3.900" y="32" width="3.100" height="8.8" fill="#ffc21a"/><rect x="18.100" y="3" width="12.900" height="40.700" rx="1" fill="url(#g51)"/><path d="M19.300,12 Q19.300,5.500 24.500,5.500 Q29.800,5.500 29.800,12Z" fill="#e9a326" stroke="#c9821a" stroke-width=".6"/><rect x="16.800" y="11.800" width="15.200" height="3.700" rx="1.200" fill="#d98a1e"/><circle cx="24.400" cy="18.900" r=".9" fill="#5a3208"/><rect x="17.100" y="20.800" width="14.900" height="9" rx="2" fill="none" stroke="#eef0f2" stroke-width="2.200"/><rect x="18.100" y="19.300" width="12.900" height="3.400" fill="#e3901d"/><circle cx="24.400" cy="18.900" r=".9" fill="#5a3208"/><path d="M23.500,24 Q24.500,22.600 25.500,24 L25.100,30.600 H23.900Z" fill="#e2e6ea"/></svg></div><div class="lb"><span style="letter-spacing:-0.335px">TGMacro2....</span></div></div>
<div class="di" style="left:975px;top:686px"><div class="ic"><svg viewBox="0 0 48 48"><defs><linearGradient id="g52" x1="0" y1="0" x2="1" y2="0"><stop offset="0" stop-color="#e9c25f"/><stop offset=".35" stop-color="#f2d073"/><stop offset="1" stop-color="#fde08a"/></linearGradient><linearGradient id="g53" x1="0" y1="0" x2="0" y2="1"><stop offset="0" stop-color="#feeaa8"/><stop offset="1" stop-color="#fbdc86"/></linearGradient></defs><path d="M8.300,5 H33.200 V25.700 L35.200,27.800 V39 H8.300Z" fill="url(#g52)"/><rect x="16.500" y="38" width="18.700" height="1" fill="#ffd25e"/><path d="M18,9 L34,7 V42 L18,41Z" fill="#fbfbfb"/><path d="M18,10 L31,8.500 V43 L18,41Z" fill="#171a16"/><path d="M20,14 l8,-1 M20,17 l6,-.7 M21,20 l7,-.8 M20,23 l5,-.5 M21,26 l7,-.7 M20,29 l6,-.6 M21,32 l6,-.5 M20,35 l5,-.4" stroke="#8fae3a" stroke-width="1.100"/><path d="M24,12 l5,-.6 M25,18.500 l4,-.4" stroke="#e0a030" stroke-width="1.200"/><path d="M8.300,5 L17.500,12.300 V34 H16.700 V45.600 L8.300,39.400Z" fill="url(#g53)"/></svg></div><div class="lb"><span style="letter-spacing:-0.029px">Better-Anu...</span></div></div>
<div class="di" style="left:0px;top:784px"><div class="ic"><svg viewBox="0 0 48 48"><defs><linearGradient id="g54" x1="0" y1="0" x2="1" y2="0"><stop offset="0" stop-color="#e9c25f"/><stop offset=".35" stop-color="#f2d073"/><stop offset="1" stop-color="#fde08a"/></linearGradient><linearGradient id="g55" x1="0" y1="0" x2="0" y2="1"><stop offset="0" stop-color="#feeaa8"/><stop offset="1" stop-color="#fbdc86"/></linearGradient></defs><path d="M8.300,5 H33.200 V25.700 L35.200,27.800 V39 H8.300Z" fill="url(#g54)"/><rect x="16.500" y="38" width="18.700" height="1" fill="#ffd25e"/><path d="M17,9 L31,7.500 L38,11 V40 L18,42Z" fill="#fbfbfb" stroke="#d5d9de" stroke-width=".8"/><path d="M33,12 L38,11 V40 L33,41Z" fill="#eaf2fa" stroke="#b5d1ea" stroke-width=".7"/><text x="17" y="36" font-size="30" font-weight="bold" fill="#2a2a2a" font-family="Liberation Sans, sans-serif" transform="skewY(-4)">J</text><path d="M8.300,5 L17.500,12.300 V34 H16.700 V45.600 L8.300,39.400Z" fill="url(#g55)"/></svg></div><div class="lb"><span style="letter-spacing:-0.448px">.vs</span></div></div>
<div class="di" style="left:75px;top:784px"><div class="ic"><svg viewBox="0 0 48 48"><defs><linearGradient id="g56" x1="0" y1="0" x2="1" y2="1"><stop offset="0" stop-color="#f7f7f7"/><stop offset="1" stop-color="#dcdcdc"/></linearGradient></defs><path d="M8.500,3.500 H31.500 L39.500,11.500 V44.500 H8.500Z" fill="#fff" stroke="#a89d98" stroke-width="1"/><path d="M31.500,3.500 V11.500 H39.500Z" fill="url(#g56)" stroke="#a8a3a0" stroke-width=".8" stroke-linejoin="round"/><path d="M31.800,12 H39" stroke="#8d8d8d" stroke-width=".7" opacity=".7"/><path d="M11,7.5 H29.9 M11,10.5 H29.9 M11,13.5 H36.9 M11,16.5 H36.9 M11,19.5 H36.9 M11,22.5 H36.9 M11,25.5 H36.9 M11,28.5 H36.9 M11,31.5 H36.9 M11,34.5 H36.9 M11,37.5 H36.9 M11,40.5 H36.9 " stroke="#a4a4a4" stroke-width="1.050" fill="none"/></svg></div><div class="lb"><span style="letter-spacing:0.312px">d</span></div></div>
<div class="di" style="left:150px;top:784px"><div class="ic"><svg viewBox="0 0 48 48"><defs><linearGradient id="g57" x1="0" y1="0" x2="1" y2="1"><stop offset="0" stop-color="#f7f7f7"/><stop offset="1" stop-color="#dcdcdc"/></linearGradient></defs><path d="M8.500,3.500 H31.500 L39.500,11.500 V44.500 H8.500Z" fill="#fff" stroke="#a89d98" stroke-width="1"/><path d="M31.500,3.500 V11.500 H39.500Z" fill="url(#g57)" stroke="#a8a3a0" stroke-width=".8" stroke-linejoin="round"/><path d="M31.800,12 H39" stroke="#8d8d8d" stroke-width=".7" opacity=".7"/><path d="M11,7.5 H29.9 M11,10.5 H29.9 M11,13.5 H36.9 M11,16.5 H36.9 M11,19.5 H36.9 M11,22.5 H36.9 M11,25.5 H36.9 M11,28.5 H36.9 M11,31.5 H36.9 M11,34.5 H36.9 M11,37.5 H36.9 M11,40.5 H36.9 " stroke="#a4a4a4" stroke-width="1.050" fill="none"/></svg></div><div class="lb"><span style="letter-spacing:-0.126px">el00ngui v5</span></div></div>
<div class="di" style="left:225px;top:784px"><div class="ic"><svg viewBox="0 0 48 48"><defs><linearGradient id="g58" x1="0" y1="0" x2="1" y2="1"><stop offset="0" stop-color="#1e84e2"/><stop offset=".5" stop-color="#0074d9"/><stop offset="1" stop-color="#0070d6"/></linearGradient></defs><rect x="3.700" y="8.700" width="40.500" height="29.500" fill="#f3f3f3" stroke="#a39d9a" stroke-width="1"/><rect x="3.200" y="8.200" width="41.500" height="2.600" fill="#8f8f8f"/><rect x="36" y="9" width="1.900" height="1.200" fill="#e8e8e8"/><rect x="39.100" y="9" width="1.900" height="1.200" fill="#e8e8e8"/><rect x="42.100" y="9" width="1.900" height="1.200" fill="#e8e8e8"/><rect x="4.200" y="12.800" width="7.800" height="24.900" fill="#e9e9e9"/><rect x="12" y="12.800" width="19" height="24" fill="#fcfcfc"/><rect x="13.100" y="14" width="16.900" height="20.900" fill="url(#g58)"/><path d="M5,15.5 h1 M7,15.5 h4 M5,18.5 h1 M7,18.5 h4 M5,21.5 h1 M7,21.5 h4 M5,24.5 h1 M7,24.5 h4 M5,27.5 h1 M7,27.5 h4 " stroke="#8c8c8c" stroke-width="1"/><path d="M32.100,15.5 h9.8 M32.100,17.5 h9.8 M32.100,19.5 h9.8 M32.100,21.5 h9.8 M32.100,23.5 h9.8 M32.100,25.5 h9.8 M32.100,27.5 h9.8 M32.100,29.5 h5.8 " stroke="#8e8e8e" stroke-width="1"/></svg></div><div class="lb"><span style="letter-spacing:-0.336px">iexpress</span></div></div>
<div class="di" style="left:300px;top:784px"><div class="ic"><svg viewBox="0 0 48 48"><defs><linearGradient id="g59" x1=".1" y1="0" x2=".8" y2="1"><stop offset="0" stop-color="#3f7aff"/><stop offset=".5" stop-color="#2a8bff"/><stop offset="1" stop-color="#08a2ff"/></linearGradient></defs><path d="M24,0 C42,0 48,6 48,24 C48,42 42,48 24,48 C6,48 0,42 0,24 C0,6 6,0 24,0Z" fill="url(#g59)"/><path d="M10.900,27.800 L16.800,18.100 M24.100,27.800 L30.300,18.100" stroke="#fff" stroke-width="9.600" stroke-linecap="round"/><circle cx="37.600" cy="28.400" r="5.400" fill="#fff"/><g><rect x="0.500" y="35.500" width="12" height="12" fill="#fbfbfb" stroke="#d4c9c9" stroke-width="1"/><path d="M3.800,37.300 H9.900 V43.300 L8.200,41.600 Q5.700,43 5.700,46.600 Q2.200,44.600 3,42 Q3.700,40 5.500,39.100Z" fill="#2f62a8"/></g></svg></div><div class="lb"><span style="letter-spacing:0.028px">MuMu Player</span><br><span style="letter-spacing:-0.68px">12</span></div></div>
<div class="di" style="left:375px;top:784px"><div class="ic"><svg viewBox="0 0 48 48"><path d="M11.500,3 H30.800 L43,15 V41 Q43,45 39,45 H11 Q7,45 7,41 V7 Q7,3 11.500,3Z" fill="#fbf8f5"/><path d="M0.300,39.200 L8.600,30.900 L16,38 L23.400,30.900 L31.700,39.200 L23.400,47.700 L19.500,44 L16,46.800 L12.500,44 L8.600,47.700Z" fill="#fbf8f5"/><circle cx="16" cy="39.200" r="7.600" fill="#fbf8f5"/><path d="M14,7.500 H29.300 L38.250,16.500 V38.500 Q38.250,41.450 35.300,41.450 H14 Q11.350,41.450 11.350,38.500 V10.500 Q11.350,7.500 14,7.500Z" fill="#f0f0f1" stroke="#3f3f3f" stroke-width="2.900" stroke-linejoin="round"/><path d="M28.900,6.100 L39.700,16.900 V17.800 H30.900 Q28.900,17.800 28.900,15.800Z" fill="#3f3f3f"/><path d="M0.300,39.200 L8.600,30.900 L16.900,39.200 L8.600,47.700Z M15.100,39.200 L23.400,30.900 L31.700,39.200 L23.400,47.700Z" fill="#fbf8f5"/><circle cx="16" cy="39.200" r="7.600" fill="#fbf8f5"/><path d="M9.800,34.800 L5.200,39.200 L9.800,43.600" fill="none" stroke="#3f3f3f" stroke-width="2.300"/><path d="M22.200,34.800 L26.800,39.200 L22.200,43.600" fill="none" stroke="#3f3f3f" stroke-width="2.300"/><circle cx="16" cy="39.200" r="4.600" fill="#0a93d8"/></svg></div><div class="lb"><span style="letter-spacing:-0.272px">rc7773.hta</span></div></div>
<div class="di" style="left:450px;top:784px"><div class="ic"><svg viewBox="0 0 48 48"><defs><linearGradient id="g60" x1="0" y1="0" x2="1" y2="1"><stop offset="0" stop-color="#f7f7f7"/><stop offset="1" stop-color="#dcdcdc"/></linearGradient></defs><path d="M8.500,3.500 H31.500 L39.500,11.500 V44.500 H8.500Z" fill="#fff" stroke="#a89d98" stroke-width="1"/><path d="M31.500,3.500 V11.500 H39.500Z" fill="url(#g60)" stroke="#a8a3a0" stroke-width=".8" stroke-linejoin="round"/><path d="M31.800,12 H39" stroke="#8d8d8d" stroke-width=".7" opacity=".7"/><path d="M11,7.5 H29.9 M11,10.5 H29.9 M11,13.5 H36.9 M11,16.5 H36.9 M11,19.5 H36.9 M11,22.5 H36.9 M11,25.5 H36.9 M11,28.5 H36.9 M11,31.5 H36.9 M11,34.5 H36.9 M11,37.5 H36.9 M11,40.5 H36.9 " stroke="#a4a4a4" stroke-width="1.050" fill="none"/></svg></div><div class="lb"><span style="letter-spacing:0.125px">roblox logger</span></div></div>
<div class="di" style="left:525px;top:784px"><div class="ic"><svg viewBox="0 0 48 48"><defs><linearGradient id="g61" x1="0" y1="0" x2="1" y2="1"><stop offset="0" stop-color="#f7f7f7"/><stop offset="1" stop-color="#dcdcdc"/></linearGradient></defs><path d="M8.500,3.500 H31.500 L39.500,11.500 V44.500 H8.500Z" fill="#fff" stroke="#a89d98" stroke-width="1"/><path d="M31.500,3.500 V11.500 H39.500Z" fill="url(#g61)" stroke="#a8a3a0" stroke-width=".8" stroke-linejoin="round"/><path d="M31.800,12 H39" stroke="#8d8d8d" stroke-width=".7" opacity=".7"/><path d="M11,7.5 H29.9 M11,10.5 H29.9 M11,13.5 H36.9 M11,16.5 H36.9 M11,19.5 H36.9 M11,22.5 H36.9 M11,25.5 H36.9 M11,28.5 H36.9 M11,31.5 H36.9 M11,34.5 H36.9 M11,37.5 H36.9 M11,40.5 H36.9 " stroke="#a4a4a4" stroke-width="1.050" fill="none"/></svg></div><div class="lb"><span style="letter-spacing:-0.088px">Snowball</span></div></div>
<div class="di" style="left:600px;top:784px"><div class="ic"><svg viewBox="0 0 48 48"><rect width="48" height="48" fill="#fdfdfe"/><path d="M23.400,1.200 L40.800,12.300 L24.400,20.700 L5.700,11.200Z" fill="#dd86f4"/><path d="M5.700,11.200 L24.400,20.700 V38.100 L5.700,31.300Z" fill="#f5a6f7"/><path d="M24.400,20.700 L40.800,12.300 V30.800 L24.400,38.100Z" fill="#9b63e1"/><rect x="8.800" y="19.800" width="3" height="3.200" fill="#4d2a55" transform="skewY(24) translate(0,-4.3)"/><rect x="17.400" y="24.200" width="3" height="3.200" fill="#4d2a55" transform="skewY(24) translate(0,-8.2)"/><path d="M10.700,27.400 Q13.500,32.200 18.300,31.600" fill="none" stroke="#4d2a55" stroke-width="1.900"/><rect x="7.200" y="23" width="3" height="2.600" fill="#e9f183" opacity=".9"/><rect x="19.300" y="30" width="3" height="2.600" fill="#e9f183" opacity=".9"/><path d="M13,41.500 h14" stroke="#ecb6f0" stroke-width="3.500" opacity=".8"/><path d="M27,41.500 h19" stroke="#d9d9dc" stroke-width="4.500" opacity=".8"/><path d="M29,41.500 h15" stroke="#b9b9be" stroke-width="1.500" stroke-dasharray="2 1.500" opacity=".8"/><g><rect x="0.500" y="35.500" width="12" height="12" fill="#fbfbfb" stroke="#d4c9c9" stroke-width="1"/><path d="M3.800,37.300 H9.900 V43.300 L8.200,41.600 Q5.700,43 5.700,46.600 Q2.200,44.600 3,42 Q3.700,40 5.500,39.100Z" fill="#2f62a8"/></g></svg></div><div class="lb"><span style="letter-spacing:-0.2px">VTuber Editor</span></div></div>
<div class="di" style="left:675px;top:784px"><div class="ic"><svg viewBox="0 0 48 48"><rect x="3.700" y="7.700" width="40.500" height="29.500" fill="#fafafa" stroke="#a39d9a" stroke-width="1"/><rect x="3.200" y="7.200" width="41.500" height="2.600" fill="#8a8a8a"/><rect x="36" y="8" width="1.900" height="1.200" fill="#e8e8e8"/><rect x="39.100" y="8" width="1.900" height="1.200" fill="#e8e8e8"/><rect x="42.100" y="8" width="1.900" height="1.200" fill="#e8e8e8"/><polygon points="25.70,20.20 27.76,21.03 27.59,22.07 25.37,22.20 25.08,22.93 26.57,24.57 25.97,25.44 23.91,24.59 23.33,25.13 23.96,27.25 23.04,27.77 21.56,26.12 20.80,26.34 20.45,28.53 19.40,28.60 18.78,26.47 18.00,26.34 16.73,28.17 15.76,27.77 16.12,25.58 15.47,25.13 13.54,26.22 12.83,25.44 14.11,23.62 13.72,22.93 11.51,23.08 11.21,22.07 13.15,20.99 13.10,20.20 11.04,19.37 11.21,18.33 13.43,18.20 13.72,17.47 12.23,15.83 12.83,14.96 14.89,15.81 15.47,15.27 14.84,13.15 15.76,12.63 17.24,14.28 18.00,14.06 18.35,11.87 19.40,11.80 20.02,13.93 20.80,14.06 22.07,12.23 23.04,12.63 22.68,14.82 23.33,15.27 25.26,14.18 25.97,14.96 24.69,16.78 25.08,17.47 27.29,17.32 27.59,18.33 25.65,19.41" fill="#dadfe4" stroke="#8f949a" stroke-width=".7" stroke-linejoin="round"/><circle cx="19.4" cy="20.2" r="3" fill="#fafafa" stroke="#8f949a" stroke-width=".7"/><polygon points="34.80,30.73 36.20,32.07 35.65,33.03 33.79,32.48 33.20,33.00 33.54,34.92 32.53,35.36 31.35,33.82 30.56,33.90 29.72,35.65 28.64,35.42 28.59,33.47 27.91,33.08 26.19,34.00 25.46,33.17 26.56,31.57 26.24,30.85 24.31,30.59 24.20,29.49 26.03,28.84 26.20,28.07 24.80,26.73 25.35,25.77 27.21,26.32 27.80,25.80 27.46,23.88 28.47,23.44 29.65,24.98 30.44,24.90 31.28,23.15 32.36,23.38 32.41,25.33 33.09,25.72 34.81,24.80 35.54,25.63 34.44,27.23 34.76,27.95 36.69,28.21 36.80,29.31 34.97,29.96" fill="#dadfe4" stroke="#8f949a" stroke-width=".7" stroke-linejoin="round"/><circle cx="30.5" cy="29.4" r="1.5" fill="#fafafa" stroke="#8f949a" stroke-width=".7"/></svg></div><div class="lb">ЦЩЦЦ</div></div>
<div class="di" style="left:750px;top:784px"><div class="ic"><svg viewBox="0 0 48 48"><defs><linearGradient id="g62" x1="0" y1="0" x2="1" y2="1"><stop offset="0" stop-color="#f7f7f7"/><stop offset="1" stop-color="#dcdcdc"/></linearGradient></defs><path d="M8.500,3.500 H31.500 L39.500,11.500 V44.500 H8.500Z" fill="#fff" stroke="#a89d98" stroke-width="1"/><path d="M31.500,3.500 V11.500 H39.500Z" fill="url(#g62)" stroke="#a8a3a0" stroke-width=".8" stroke-linejoin="round"/><path d="M31.800,12 H39" stroke="#8d8d8d" stroke-width=".7" opacity=".7"/><path d="M11,7.5 H29.9 M11,10.5 H29.9 M11,13.5 H36.9 M11,16.5 H36.9 M11,19.5 H36.9 M11,22.5 H36.9 M11,25.5 H36.9 M11,28.5 H36.9 M11,31.5 H36.9 M11,34.5 H36.9 M11,37.5 H36.9 M11,40.5 H36.9 " stroke="#a4a4a4" stroke-width="1.050" fill="none"/></svg></div><div class="lb"><span style="letter-spacing:-0.078px">Roblox Id</span><br><span style="letter-spacing:0.14px">info origin...</span></div></div>
<div class="di" style="left:975px;top:784px"><div class="ic"><svg viewBox="0 0 48 48"><defs><linearGradient id="g63" x1="0" y1="0" x2="1" y2="0"><stop offset="0" stop-color="#e9c25f"/><stop offset=".35" stop-color="#f2d073"/><stop offset="1" stop-color="#fde08a"/></linearGradient><linearGradient id="g64" x1="0" y1="0" x2="0" y2="1"><stop offset="0" stop-color="#feeaa8"/><stop offset="1" stop-color="#fbdc86"/></linearGradient></defs><path d="M8.300,5 H33.200 V25.700 L35.200,27.800 V39 H8.300Z" fill="url(#g63)"/><rect x="16.500" y="38" width="18.700" height="1" fill="#ffd25e"/><path d="M14.350,7.550 L38.900,10.700 V43.700 L17,40.500Z" fill="#f8f8f9"/><path d="M18.800,10 L31.200,11.500 L34.900,16 V41.300 L18.800,39.300Z" fill="#ebebec" stroke="#f4f4f4" stroke-width=".6"/><path d="M31.200,11.500 L31.600,15.600 L34.900,16Z" fill="#dcdcdc"/><path d="M34.900,16 V41.300 L18.800,39.300" fill="none" stroke="#cfe3f2" stroke-width=".7"/><path d="M18.800,10 L31.200,11.500" fill="none" stroke="#f0e3b8" stroke-width=".6"/><path d="M8.300,5 L17.500,12.300 V34 H16.700 V45.600 L8.300,39.400Z" fill="url(#g64)"/></svg></div><div class="lb"><span style="letter-spacing:-0.224px">RedTiger-T...</span></div></div>
<div class="di" style="left:0px;top:882px"><div class="ic"><svg viewBox="0 0 48 48"><defs><linearGradient id="g65" x1="0" y1="0" x2="1" y2="0"><stop offset="0" stop-color="#e9c25f"/><stop offset=".35" stop-color="#f2d073"/><stop offset="1" stop-color="#fde08a"/></linearGradient><linearGradient id="g66" x1="0" y1="0" x2="0" y2="1"><stop offset="0" stop-color="#feeaa8"/><stop offset="1" stop-color="#fbdc86"/></linearGradient></defs><path d="M8.300,5 H33.200 V25.700 L35.200,27.800 V39 H8.300Z" fill="url(#g65)"/><rect x="16.500" y="38" width="18.700" height="1" fill="#ffd25e"/><path d="M8.300,5 L17.500,12.300 V34 H16.700 V45.600 L8.300,39.400Z" fill="url(#g66)"/></svg></div><div class="lb"><span style="letter-spacing:-0.06px">Roblox</span><br><span style="letter-spacing:-0.078px">Polhpartz</span></div></div>
<div class="di" style="left:75px;top:882px"><div class="ic"><svg viewBox="0 0 48 48"><path d="M11.500,3 H30.800 L43,15 V41 Q43,45 39,45 H11 Q7,45 7,41 V7 Q7,3 11.500,3Z" fill="#fbf8f5"/><path d="M0.300,39.200 L8.600,30.900 L16,38 L23.400,30.900 L31.700,39.200 L23.400,47.700 L19.500,44 L16,46.800 L12.500,44 L8.600,47.700Z" fill="#fbf8f5"/><circle cx="16" cy="39.200" r="7.600" fill="#fbf8f5"/><path d="M14,7.500 H29.300 L38.250,16.500 V38.500 Q38.250,41.450 35.300,41.450 H14 Q11.350,41.450 11.350,38.500 V10.500 Q11.350,7.500 14,7.500Z" fill="#f0f0f1" stroke="#3f3f3f" stroke-width="2.900" stroke-linejoin="round"/><path d="M28.900,6.100 L39.700,16.900 V17.800 H30.900 Q28.900,17.800 28.900,15.800Z" fill="#3f3f3f"/><path d="M0.300,39.200 L8.600,30.900 L16.900,39.200 L8.600,47.700Z M15.100,39.200 L23.400,30.900 L31.700,39.200 L23.400,47.700Z" fill="#fbf8f5"/><circle cx="16" cy="39.200" r="7.600" fill="#fbf8f5"/><path d="M9.800,34.800 L5.200,39.200 L9.800,43.600" fill="none" stroke="#3f3f3f" stroke-width="2.300"/><path d="M22.200,34.800 L26.800,39.200 L22.200,43.600" fill="none" stroke="#3f3f3f" stroke-width="2.300"/><circle cx="16" cy="39.200" r="4.600" fill="#0a93d8"/></svg></div><div class="lb"><span style="letter-spacing:0.104px">dd.hta</span></div></div>
<div class="di" style="left:150px;top:882px"><div class="ic"><svg viewBox="0 0 48 48"><defs><linearGradient id="g67" x1="0" y1="0" x2="1" y2="1"><stop offset="0" stop-color="#f7f7f7"/><stop offset="1" stop-color="#dcdcdc"/></linearGradient></defs><path d="M8.500,3.500 H31.500 L39.500,11.500 V44.500 H8.500Z" fill="#fff" stroke="#a89d98" stroke-width="1"/><path d="M31.500,3.500 V11.500 H39.500Z" fill="url(#g67)" stroke="#a8a3a0" stroke-width=".8" stroke-linejoin="round"/><path d="M31.800,12 H39" stroke="#8d8d8d" stroke-width=".7" opacity=".7"/><path d="M11,7.5 H29.9 M11,10.5 H29.9 M11,13.5 H36.9 M11,16.5 H36.9 M11,19.5 H36.9 M11,22.5 H36.9 M11,25.5 H36.9 M11,28.5 H36.9 M11,31.5 H36.9 M11,34.5 H36.9 M11,37.5 H36.9 M11,40.5 H36.9 " stroke="#a4a4a4" stroke-width="1.050" fill="none"/></svg></div><div class="lb"><span style="letter-spacing:-0.125px">giant sized</span><br><span style="letter-spacing:-0.172px">hats</span></div></div>
<div class="di" style="left:225px;top:882px"><div class="ic"><svg viewBox="0 0 48 48"><path d="M11.500,3 H30.800 L43,15 V41 Q43,45 39,45 H11 Q7,45 7,41 V7 Q7,3 11.500,3Z" fill="#fbf8f5"/><path d="M0.300,39.200 L8.600,30.900 L16,38 L23.400,30.900 L31.700,39.200 L23.400,47.700 L19.500,44 L16,46.800 L12.500,44 L8.600,47.700Z" fill="#fbf8f5"/><circle cx="16" cy="39.200" r="7.600" fill="#fbf8f5"/><path d="M14,7.500 H29.300 L38.250,16.500 V38.500 Q38.250,41.450 35.300,41.450 H14 Q11.350,41.450 11.350,38.500 V10.500 Q11.350,7.500 14,7.500Z" fill="#f0f0f1" stroke="#3f3f3f" stroke-width="2.900" stroke-linejoin="round"/><path d="M28.900,6.100 L39.700,16.900 V17.800 H30.900 Q28.900,17.800 28.900,15.800Z" fill="#3f3f3f"/><path d="M0.300,39.200 L8.600,30.900 L16.900,39.200 L8.600,47.700Z M15.100,39.200 L23.400,30.900 L31.700,39.200 L23.400,47.700Z" fill="#fbf8f5"/><circle cx="16" cy="39.200" r="7.600" fill="#fbf8f5"/><path d="M9.800,34.800 L5.200,39.200 L9.800,43.600" fill="none" stroke="#3f3f3f" stroke-width="2.300"/><path d="M22.200,34.800 L26.800,39.200 L22.200,43.600" fill="none" stroke="#3f3f3f" stroke-width="2.300"/><circle cx="16" cy="39.200" r="4.600" fill="#0a93d8"/></svg></div><div class="lb"><span style="letter-spacing:-0.272px">Imgae</span><br><span style="letter-spacing:0.128px">logger.hta</span></div></div>
<div class="di" style="left:300px;top:882px"><div class="ic"><svg viewBox="0 0 48 48"><defs><linearGradient id="g68" x1="0" y1="0" x2="1" y2="1"><stop offset="0" stop-color="#f7f7f7"/><stop offset="1" stop-color="#dcdcdc"/></linearGradient></defs><path d="M8.500,3.500 H31.500 L39.500,11.500 V44.500 H8.500Z" fill="#fff" stroke="#a89d98" stroke-width="1"/><path d="M31.500,3.500 V11.500 H39.500Z" fill="url(#g68)" stroke="#a8a3a0" stroke-width=".8" stroke-linejoin="round"/><path d="M31.800,12 H39" stroke="#8d8d8d" stroke-width=".7" opacity=".7"/><path d="M11,7.5 H29.9 M11,10.5 H29.9 M11,13.5 H36.9 M11,16.5 H36.9 M11,19.5 H36.9 M11,22.5 H36.9 M11,25.5 H36.9 M11,28.5 H36.9 M11,31.5 H36.9 M11,34.5 H36.9 M11,37.5 H36.9 M11,40.5 H36.9 " stroke="#a4a4a4" stroke-width="1.050" fill="none"/></svg></div><div class="lb"><span style="letter-spacing:0.326px">now.gg</span></div></div>
<div class="di" style="left:375px;top:882px"><div class="ic"><svg viewBox="0 0 48 48"><defs><linearGradient id="g69" x1="0" y1="0" x2="1" y2="1"><stop offset="0" stop-color="#f7f7f7"/><stop offset="1" stop-color="#dcdcdc"/></linearGradient></defs><path d="M8.500,3.500 H31.500 L39.500,11.500 V44.500 H8.500Z" fill="#fff" stroke="#a89d98" stroke-width="1"/><path d="M31.500,3.500 V11.500 H39.500Z" fill="url(#g69)" stroke="#a8a3a0" stroke-width=".8" stroke-linejoin="round"/><path d="M31.800,12 H39" stroke="#8d8d8d" stroke-width=".7" opacity=".7"/><path d="M11,7.5 H29.9 M11,10.5 H29.9 M11,13.5 H36.9 M11,16.5 H36.9 M11,19.5 H36.9 M11,22.5 H36.9 M11,25.5 H36.9 M11,28.5 H36.9 M11,31.5 H36.9 M11,34.5 H36.9 M11,37.5 H36.9 M11,40.5 H36.9 " stroke="#a4a4a4" stroke-width="1.050" fill="none"/></svg></div><div class="lb"><span style="letter-spacing:-0.059px">regretevator</span><br><span style="letter-spacing:-0.064px">item sounds</span></div></div>
<div class="di" style="left:450px;top:882px"><div class="ic"><svg viewBox="0 0 48 48"><defs><linearGradient id="g70" x1="0" y1="0" x2="1" y2="0"><stop offset="0" stop-color="#e9c25f"/><stop offset=".35" stop-color="#f2d073"/><stop offset="1" stop-color="#fde08a"/></linearGradient><linearGradient id="g71" x1="0" y1="0" x2="0" y2="1"><stop offset="0" stop-color="#feeaa8"/><stop offset="1" stop-color="#fbdc86"/></linearGradient></defs><path d="M8.300,5 H33.200 V25.700 L35.200,27.800 V39 H8.300Z" fill="url(#g70)"/><rect x="16.500" y="38" width="18.700" height="1" fill="#ffd25e"/><path d="M17,9 L31,7.500 L38,11 V40 L18,42Z" fill="#fbfbfb" stroke="#d5d9de" stroke-width=".8"/><path d="M22,11 L33,10 L36,12 V38 L22,39.500Z" fill="#f3f4f5" stroke="#c9d3dc" stroke-width=".7"/><path d="M27,18 q4,-1 4,3 v3 h-4 q-3,0 -3,3 q-.3,3 2.500,3" fill="none" stroke="#3b76a8" stroke-width="2.600"/><path d="M30,34 q4,-.5 3.500,-4 q0,-3 -3,-3" fill="none" stroke="#e8c540" stroke-width="2.600"/><path d="M8.300,5 L17.500,12.300 V34 H16.700 V45.600 L8.300,39.400Z" fill="url(#g71)"/></svg></div><div class="lb"><span style="letter-spacing:-0.267px">ID-to-TOKE...</span></div></div>
<div class="di" style="left:525px;top:882px"><div class="ic"><svg viewBox="0 0 48 48"><path d="M11.500,3 H30.800 L43,15 V41 Q43,45 39,45 H11 Q7,45 7,41 V7 Q7,3 11.500,3Z" fill="#fbf8f5"/><path d="M0.300,39.200 L8.600,30.900 L16,38 L23.400,30.900 L31.700,39.200 L23.400,47.700 L19.500,44 L16,46.800 L12.500,44 L8.600,47.700Z" fill="#fbf8f5"/><circle cx="16" cy="39.200" r="7.600" fill="#fbf8f5"/><path d="M14,7.500 H29.300 L38.250,16.500 V38.500 Q38.250,41.450 35.300,41.450 H14 Q11.350,41.450 11.350,38.500 V10.500 Q11.350,7.500 14,7.500Z" fill="#f0f0f1" stroke="#3f3f3f" stroke-width="2.900" stroke-linejoin="round"/><path d="M28.900,6.100 L39.700,16.900 V17.800 H30.900 Q28.900,17.800 28.900,15.800Z" fill="#3f3f3f"/><path d="M0.300,39.200 L8.600,30.900 L16.900,39.200 L8.600,47.700Z M15.100,39.200 L23.400,30.900 L31.700,39.200 L23.400,47.700Z" fill="#fbf8f5"/><circle cx="16" cy="39.200" r="7.600" fill="#fbf8f5"/><path d="M9.800,34.800 L5.200,39.200 L9.800,43.600" fill="none" stroke="#3f3f3f" stroke-width="2.300"/><path d="M22.200,34.800 L26.800,39.200 L22.200,43.600" fill="none" stroke="#3f3f3f" stroke-width="2.300"/><circle cx="16" cy="39.200" r="4.600" fill="#0a93d8"/></svg></div><div class="lb">t3x.hta</div></div>
<div class="di" style="left:600px;top:882px"><div class="ic"><svg viewBox="0 0 48 48"><defs><linearGradient id="g72" x1=".2" y1="0" x2=".9" y2="1"><stop offset="0" stop-color="#1f7fe0"/><stop offset=".45" stop-color="#4a63cf"/><stop offset=".8" stop-color="#8a4fc0"/><stop offset="1" stop-color="#8a4fc0"/></linearGradient><clipPath id="g73"><rect x="13.800" y="14.900" width="20.300" height="20.100" rx="2.600"/></clipPath></defs><path d="M7.700,2.800 H30.400 L40.200,12.600 V45 H7.700Z" fill="#fbfbfb" stroke="#7f726c" stroke-width="1.200" stroke-linejoin="round"/><path d="M30.400,2.800 V12.600 H40.200Z" fill="#fdfdfd" stroke="#7f726c" stroke-width="1.200" stroke-linejoin="round"/><rect x="13.800" y="14.900" width="20.300" height="20.100" rx="2.600" fill="url(#g72)"/><g clip-path="url(#g73)"><path d="M12,33.500 L22.300,22.800 Q23.800,21.300 25.300,22.800 L36,33 V37 H12Z" fill="#3fc3f8"/><path d="M17,36.500 L26.300,27 Q27.500,25.800 28.700,27 L36,34 V37Z" fill="#1a8ce6"/></g><circle cx="29" cy="18.900" r="2" fill="#f4f4fa"/></svg></div><div class="lb"><span style="letter-spacing:-0.216px">www.2452...</span></div></div>
<div class="di" style="left:675px;top:882px"><div class="ic"><svg viewBox="0 0 48 48"><defs><linearGradient id="g74" x1="0" y1="0" x2="1" y2="1"><stop offset="0" stop-color="#f7f7f7"/><stop offset="1" stop-color="#dcdcdc"/></linearGradient></defs><path d="M8.500,3.500 H31.500 L39.500,11.500 V44.500 H8.500Z" fill="#fff" stroke="#a89d98" stroke-width="1"/><path d="M31.500,3.500 V11.500 H39.500Z" fill="url(#g74)" stroke="#a8a3a0" stroke-width=".8" stroke-linejoin="round"/><path d="M31.800,12 H39" stroke="#8d8d8d" stroke-width=".7" opacity=".7"/><path d="M11,7.5 H29.9 M11,10.5 H29.9 M11,13.5 H36.9 M11,16.5 H36.9 M11,19.5 H36.9 M11,22.5 H36.9 M11,25.5 H36.9 M11,28.5 H36.9 M11,31.5 H36.9 M11,34.5 H36.9 M11,37.5 H36.9 M11,40.5 H36.9 " stroke="#a4a4a4" stroke-width="1.050" fill="none"/></svg></div><div class="lb">щьп</div></div>
<div class="di" style="left:750px;top:882px"><div class="ic"><svg viewBox="0 0 48 48"><defs><linearGradient id="g75" x1="0" y1="0" x2="1" y2="0"><stop offset="0" stop-color="#e9c25f"/><stop offset=".35" stop-color="#f2d073"/><stop offset="1" stop-color="#fde08a"/></linearGradient><linearGradient id="g76" x1="0" y1="0" x2="0" y2="1"><stop offset="0" stop-color="#feeaa8"/><stop offset="1" stop-color="#fbdc86"/></linearGradient></defs><path d="M8.300,5 H33.200 V25.700 L35.200,27.800 V39 H8.300Z" fill="url(#g75)"/><rect x="16.500" y="38" width="18.700" height="1" fill="#ffd25e"/><path d="M14.350,7.550 L38.900,10.700 V43.700 L17,40.500Z" fill="#f8f8f9"/><path d="M18.800,10 L31.200,11.500 L34.900,16 V41.300 L18.800,39.300Z" fill="#ebebec" stroke="#f4f4f4" stroke-width=".6"/><path d="M31.200,11.500 L31.600,15.600 L34.900,16Z" fill="#dcdcdc"/><path d="M34.900,16 V41.300 L18.800,39.300" fill="none" stroke="#cfe3f2" stroke-width=".7"/><path d="M18.800,10 L31.200,11.500" fill="none" stroke="#f0e3b8" stroke-width=".6"/><path d="M8.300,5 L17.500,12.300 V34 H16.700 V45.600 L8.300,39.400Z" fill="url(#g76)"/></svg></div><div class="lb"><span style="letter-spacing:-0.197px">OnlineSim...</span></div></div>
<div class="di" style="left:1125px;top:294px"><div class="ic"><svg viewBox="0 0 48 48"><defs><linearGradient id="g77" x1=".7" y1="0" x2=".3" y2="1"><stop offset="0" stop-color="#5a68ff"/><stop offset=".5" stop-color="#7a48ff"/><stop offset="1" stop-color="#a02aff"/></linearGradient></defs><g transform="rotate(15 24 24)" fill="url(#g77)"><path d="M4.500,4.500 H22.800 V19 H19 V22.800 H4.500Z"/><path d="M25.200,4.500 H43.500 V22.800 H29 V19 H25.200Z"/><path d="M4.500,25.200 H19 V29 H22.800 V43.500 H4.500Z"/><path d="M25.200,43.500 V29 H29 V25.200 H43.500 V43.500Z"/></g></svg></div><div class="lb">Bloxstrap-v...</div></div>
</div>
<div id="win">
<style>
#win .i16{position:absolute;width:16px;height:16px;overflow:visible;}
#win .t{position:absolute;white-space:nowrap;font-size:12px;line-height:16px;}
#win .nm{color:#111;letter-spacing:.22px;}
#win .dt{color:#6d6d6d;letter-spacing:-.62px;}
#win .tp{color:#6d6d6d;letter-spacing:-.17px;}
#win .sz{color:#6d6d6d;letter-spacing:-.2px;text-align:right;}
#win .hd{color:#4c607a;letter-spacing:-.1px;}
#win .sb{color:#111;letter-spacing:.05px;}
#win .pin{position:absolute;width:11px;height:11px;}
#win .chv{position:absolute;width:10px;height:10px;}
#win svg{position:absolute;overflow:visible;}
</style>
<div class="abs" style="left:9px;top:7px;width:16px;height:16px"><svg class="i16" viewBox="0 0 16 16"><rect x="0" y="2" width="16" height="9.600" fill="#1c9af5"/><path d="M8.500,2 L14.500,2 L7.500,11.600 L0,11.600 L0,10z" fill="#3db0fc" opacity=".55"/><rect x="0" y="11.400" width="16" height="2.400" fill="#0f66bc"/><rect x="1" y="12.100" width="1" height="1" fill="#f2f8fe"/><rect x="2" y="12.300" width="8.800" height=".7" fill="#cfe6fa"/><rect x="12" y="12.100" width="1" height="1" fill="#f2f8fe"/><rect x="14" y="12.100" width="1" height="1" fill="#f2f8fe"/></svg></div>
<div class="abs" style="left:32px;top:9px;width:1px;height:13px;background:#b9b9b9"></div>
<svg style="left:44px;top:8px" width="12" height="16" viewBox="0 0 12 16"><path d="M0.500,0.500 h7.500 l3.500,3.500 v11.500 h-11z" fill="#fff" stroke="#8d8d8d" stroke-width="1"/><path d="M8,0.500 v3.500 h3.500" fill="none" stroke="#8d8d8d" stroke-width="1"/><path d="M2.200,8.500 l2.800,3 l5,-5.800" fill="none" stroke="#e8501c" stroke-width="1.500"/></svg>
<svg style="left:66px;top:8px" width="13" height="16" viewBox="0 0 13 16"><rect x="0.500" y="0.500" width="11" height="15" fill="#fde9a3" stroke="#efc95f" stroke-width="1"/><rect x="10.500" y="9.500" width="2" height="6" fill="#fde9a3" stroke="#efc95f" stroke-width="1"/></svg>
<svg style="left:87px;top:12px" width="8" height="9" viewBox="0 0 8 9"><rect x="0" y="2" width="7.500" height="1" fill="#222"/><path d="M0.300,5 h7 l-3.500,3.500z" fill="#222"/></svg>
<div class="abs" style="left:102px;top:9px;width:1px;height:13px;background:#b9b9b9"></div>
<div class="t" style="left:110px;top:8px;color:#000;letter-spacing:.05px">Рабочий стол</div>
<svg style="left:666px;top:10px" width="10" height="10" viewBox="0 0 10 10"><path d="M0,5.500 h10" stroke="#000" stroke-width="1"/></svg>
<svg style="left:711px;top:10px" width="10" height="10" viewBox="0 0 10 10"><rect x="0.500" y="0.500" width="9" height="9" fill="none" stroke="#000" stroke-width="1"/></svg>
<svg style="left:757px;top:10px" width="10" height="10" viewBox="0 0 10 10"><path d="M0,0 L10,10 M10,0 L0,10" stroke="#000" stroke-width="1.100"/></svg>
<div class="abs" style="left:1px;top:31px;width:56px;height:23px;background:#0f63b0"></div>
<div class="t" style="left:15px;top:35px;color:#fff;letter-spacing:.1px">Файл</div>
<div class="t" style="left:71px;top:35px;color:#3b3b3b;letter-spacing:-.05px">Главная</div>
<div class="t" style="left:142px;top:35px;color:#3b3b3b;letter-spacing:-.1px">Поделиться</div>
<div class="t" style="left:233px;top:35px;color:#3b3b3b">Вид</div>
<svg style="left:747px;top:39px" width="10" height="6" viewBox="0 0 10 6"><path d="M0.500,0.500 l4.500,4.500 l4.500,-4.500" fill="none" stroke="#a0a0a0" stroke-width="1.100"/></svg>
<svg style="left:766px;top:34px" width="16" height="16" viewBox="0 0 16 16"><circle cx="8" cy="8" r="8" fill="#0f63b0"/><text x="8" y="12.600" font-size="12.500" font-weight="bold" fill="#fff" text-anchor="middle" font-family="Liberation Sans, sans-serif">?</text></svg>
<div class="abs" style="left:0;top:54px;width:786px;height:1px;background:#dadbdc"></div>
<svg style="left:14px;top:66px" width="13" height="12" viewBox="0 0 13 12"><path d="M6,0.800 L0.800,6 L6,11.200 M1,6 H12.500" fill="none" stroke="#757575" stroke-width="1.800"/></svg>
<svg style="left:44px;top:66px" width="13" height="12" viewBox="0 0 13 12"><path d="M7,0.800 L12.200,6 L7,11.200 M12,6 H0.500" fill="none" stroke="#d0d0d0" stroke-width="1.800"/></svg>
<svg style="left:70px;top:69px" width="7" height="5" viewBox="0 0 7 5"><path d="M0.500,0.500 l3,3 l3,-3" fill="none" stroke="#808080" stroke-width="1.500"/></svg>
<svg style="left:88px;top:66px" width="12" height="13" viewBox="0 0 12 13"><path d="M0.800,6 L6,0.800 L11.200,6 M6,1 V12.500" fill="none" stroke="#757575" stroke-width="1.800"/></svg>
<div class="abs" style="left:107px;top:61px;width:452px;height:22px;border:1px solid #d9d9d9;box-sizing:border-box"></div>
<div class="abs" style="left:542px;top:62px;width:1px;height:20px;background:#e5e5e5"></div>
<div class="abs" style="left:110px;top:63px;width:16px;height:16px"><svg class="i16" viewBox="0 0 16 16"><rect x="0" y="2" width="16" height="9.600" fill="#1c9af5"/><path d="M8.500,2 L14.500,2 L7.500,11.600 L0,11.600 L0,10z" fill="#3db0fc" opacity=".55"/><rect x="0" y="11.400" width="16" height="2.400" fill="#0f66bc"/><rect x="1" y="12.100" width="1" height="1" fill="#f2f8fe"/><rect x="2" y="12.300" width="8.800" height=".7" fill="#cfe6fa"/><rect x="12" y="12.100" width="1" height="1" fill="#f2f8fe"/><rect x="14" y="12.100" width="1" height="1" fill="#f2f8fe"/></svg></div>
<svg style="left:133px;top:68px" width="5" height="8" viewBox="0 0 5 8"><path d="M0.700,0.700 l3.300,3.300 l-3.300,3.300" fill="none" stroke="#707070" stroke-width="1.500"/></svg>
<div class="t" style="left:147px;top:64px;color:#111;letter-spacing:.02px">Этот компьютер</div>
<svg style="left:246px;top:68px" width="5" height="8" viewBox="0 0 5 8"><path d="M0.700,0.700 l3.300,3.300 l-3.300,3.300" fill="none" stroke="#707070" stroke-width="1.500"/></svg>
<div class="t" style="left:260px;top:64px;color:#111;letter-spacing:.05px">Рабочий стол</div>
<svg style="left:529px;top:69px" width="9" height="6" viewBox="0 0 9 6"><path d="M0.700,0.700 l3.800,3.800 l3.800,-3.800" fill="none" stroke="#555" stroke-width="1.400"/></svg>
<svg style="left:545px;top:66px" width="12" height="12" viewBox="0 0 12 12"><path d="M7.500,1.800 A4.600,4.600 0 1 1 2.300,3.500" fill="none" stroke="#6a6a6a" stroke-width="1.300"/><path d="M4.500,0 h4 v4z" fill="#6a6a6a" transform="rotate(8 7 2)"/></svg>
<div class="abs" style="left:571px;top:61px;width:202px;height:22px;border:1px solid #d9d9d9;box-sizing:border-box"></div>
<div class="t" style="left:580px;top:64px;color:#6d6d6d;letter-spacing:-.12px">Поиск в: Рабочий стол</div>
<svg style="left:752px;top:66px" width="13" height="13" viewBox="0 0 13 13"><circle cx="8.200" cy="4.800" r="3.700" fill="none" stroke="#6a6a6a" stroke-width="1.500"/><path d="M5.600,7.400 L0.800,12.200" stroke="#6a6a6a" stroke-width="1.700"/></svg>
<div class="abs" style="left:26px;top:110px;width:16px;height:16px"><svg class="i16" viewBox="0 0 16 16"><path d="M9.500,1 l1.900,4.300 l4.500,0.500 l-3.400,3.100 l1,4.600 l-4,-2.400 l-4,2.400 l1,-4.600 l-3.400,-3.100 l4.500,-0.500z" fill="#2f8be6"/><path d="M0.500,5.500 h4 M1.500,8.500 h3 M0.500,11.500 h4.500" stroke="#67b0f0" stroke-width="1.200"/></svg></div>
<div class="t sb" style="left:46px;top:110px;letter-spacing:-0.117px;">Быстрый доступ</div>
<div class="abs" style="left:7px;top:113px;width:10px;height:10px"><svg class="chv" viewBox="0 0 10 10"><path d="M1,3 l4,4 l4,-4" fill="none" stroke="#3c3c3c" stroke-width="1.700"/></svg></div>
<div class="abs" style="left:1px;top:130px;width:157px;height:24px;background:#cce8ff"></div>
<div class="abs" style="left:33px;top:134px;width:16px;height:16px"><svg class="i16" viewBox="0 0 16 16"><rect x="0" y="2" width="16" height="9.600" fill="#1c9af5"/><path d="M8.500,2 L14.500,2 L7.500,11.600 L0,11.600 L0,10z" fill="#3db0fc" opacity=".55"/><rect x="0" y="11.400" width="16" height="2.400" fill="#0f66bc"/><rect x="1" y="12.100" width="1" height="1" fill="#f2f8fe"/><rect x="2" y="12.300" width="8.800" height=".7" fill="#cfe6fa"/><rect x="12" y="12.100" width="1" height="1" fill="#f2f8fe"/><rect x="14" y="12.100" width="1" height="1" fill="#f2f8fe"/></svg></div>
<div class="t sb" style="left:54px;top:134px;letter-spacing:-0.027px;">Рабочий стол</div>
<div class="abs" style="left:144px;top:137px;width:10px;height:10px;background:#cce8ff;padding-left:6px;margin-left:-6px"><svg class="pin" style="left:6px" viewBox="0 0 11 11"><path d="M6,0.600 l4.400,4.400 l-1.200,0.400 l-1.800,1.800 l-0.100,2.600 l-5.300,-5.300 l2.600,-0.100 l1.800,-1.800z" fill="#8d959d"/><path d="M3.800,7.200 l-3.200,3.200" stroke="#8d959d" stroke-width="1.300"/></svg></div>
<div class="abs" style="left:33px;top:158px;width:16px;height:16px"><svg class="i16" viewBox="0 0 16 16"><path d="M5.500,0.500 h5 v7 h4.500 l-7,7.500 l-7,-7.500 h4.500z" fill="#2f8de4"/><path d="M1,7.500 h4.500 l2.500,4 l2.500,-4 h4.500 l-7,7.500z" fill="#1c6fc7"/></svg></div>
<div class="t sb" style="left:54px;top:158px;letter-spacing:-0.037px;">Загрузки</div>
<div class="abs" style="left:144px;top:161px;width:10px;height:10px;background:#fff;padding-left:6px;margin-left:-6px"><svg class="pin" style="left:6px" viewBox="0 0 11 11"><path d="M6,0.600 l4.400,4.400 l-1.200,0.400 l-1.800,1.800 l-0.100,2.600 l-5.300,-5.300 l2.600,-0.100 l1.800,-1.800z" fill="#8d959d"/><path d="M3.800,7.200 l-3.200,3.200" stroke="#8d959d" stroke-width="1.300"/></svg></div>
<div class="abs" style="left:33px;top:182px;width:16px;height:16px"><svg class="i16" viewBox="0 0 16 16"><path d="M2.500,0.500 h8 l3,3 v12 h-11z" fill="#fff" stroke="#8a8a8a" stroke-width="1"/><path d="M10.500,0.500 v3 h3" fill="#e8e8e8" stroke="#8a8a8a" stroke-width="1"/><path d="M4.500,3.500 h4 M4.500,5.500 h4" stroke="#4d88cf" stroke-width="1"/><rect x="4.500" y="7" width="7" height="3.500" fill="#5b9bd8"/><path d="M4.500,12.500 h7" stroke="#4d88cf" stroke-width="1"/><path d="M4.500,10 l2,-1.500 l2,1 l3,-2 v3 h-7z" fill="#3d9550"/></svg></div>
<div class="t sb" style="left:54px;top:182px;letter-spacing:0.016px;">Документы</div>
<div class="abs" style="left:144px;top:185px;width:10px;height:10px;background:#fff;padding-left:6px;margin-left:-6px"><svg class="pin" style="left:6px" viewBox="0 0 11 11"><path d="M6,0.600 l4.400,4.400 l-1.200,0.400 l-1.800,1.800 l-0.100,2.600 l-5.300,-5.300 l2.600,-0.100 l1.800,-1.800z" fill="#8d959d"/><path d="M3.800,7.200 l-3.200,3.200" stroke="#8d959d" stroke-width="1.300"/></svg></div>
<div class="abs" style="left:33px;top:206px;width:16px;height:16px"><svg class="i16" viewBox="0 0 16 16"><rect x="0.500" y="2.500" width="15" height="11" fill="#fff" stroke="#8a8a8a" stroke-width="1"/><rect x="2" y="4" width="12" height="8" fill="#7cc0ec"/><path d="M2,9 q3,-3 6,-1 q3,1.500 6,-0.500 v4.500 h-12z" fill="#3d7f4f"/><path d="M2,10.500 q4,-1.500 12,0 v1.500 h-12z" fill="#2a5f86"/><rect x="2" y="4" width="12" height="2.500" fill="#cfe6f7" opacity=".7"/></svg></div>
<div class="t sb" style="left:54px;top:206px;letter-spacing:-0.038px;">Изображения</div>
<div class="abs" style="left:144px;top:209px;width:10px;height:10px;background:#fff;padding-left:6px;margin-left:-6px"><svg class="pin" style="left:6px" viewBox="0 0 11 11"><path d="M6,0.600 l4.400,4.400 l-1.200,0.400 l-1.800,1.800 l-0.100,2.600 l-5.300,-5.300 l2.600,-0.100 l1.800,-1.800z" fill="#8d959d"/><path d="M3.800,7.200 l-3.200,3.200" stroke="#8d959d" stroke-width="1.300"/></svg></div>
<div class="abs" style="left:33px;top:230px;width:16px;height:16px"><svg class="i16" viewBox="0 0 16 16"><rect x="2.500" y="0.500" width="11" height="15" fill="#fde9a3" stroke="#efc95f" stroke-width="1"/><rect x="12.500" y="9.500" width="2" height="6" fill="#fde9a3" stroke="#efc95f" stroke-width="1"/></svg></div>
<div class="t sb" style="left:54px;top:230px;letter-spacing:0.156px;">kadick-main</div>
<div class="abs" style="left:144px;top:233px;width:10px;height:10px;background:#fff;padding-left:6px;margin-left:-6px"><svg class="pin" style="left:6px" viewBox="0 0 11 11"><path d="M6,0.600 l4.400,4.400 l-1.200,0.400 l-1.800,1.800 l-0.100,2.600 l-5.300,-5.300 l2.600,-0.100 l1.800,-1.800z" fill="#8d959d"/><path d="M3.800,7.200 l-3.200,3.200" stroke="#8d959d" stroke-width="1.300"/></svg></div>
<div class="abs" style="left:33px;top:254px;width:16px;height:16px"><svg class="i16" viewBox="0 0 16 16"><rect x="2.500" y="0.500" width="11" height="15" fill="#fde9a3" stroke="#efc95f" stroke-width="1"/><rect x="12.500" y="9.500" width="2" height="6" fill="#fde9a3" stroke="#efc95f" stroke-width="1"/></svg></div>
<div class="t sb" style="left:54px;top:254px;letter-spacing:0.081px;">OnlineSimBot-main</div>
<div class="abs" style="left:33px;top:278px;width:16px;height:16px"><svg class="i16" viewBox="0 0 16 16"><rect x="2.500" y="0.500" width="11" height="15" fill="#fde9a3" stroke="#efc95f" stroke-width="1"/><rect x="12.500" y="9.500" width="2" height="6" fill="#fde9a3" stroke="#efc95f" stroke-width="1"/></svg></div>
<div class="t sb" style="left:54px;top:278px;letter-spacing:-0.31px;">Roblox</div>
<div class="abs" style="left:33px;top:302px;width:16px;height:16px"><svg class="i16" viewBox="0 0 16 16"><rect x="2.500" y="0.500" width="11" height="15" fill="#fde9a3" stroke="#efc95f" stroke-width="1"/><rect x="12.500" y="9.500" width="2" height="6" fill="#fde9a3" stroke="#efc95f" stroke-width="1"/></svg></div>
<div class="t sb" style="left:54px;top:302px;letter-spacing:0.014px;">Снимки экрана</div>
<div class="abs" style="left:33px;top:326px;width:16px;height:16px"><svg class="i16" viewBox="0 0 16 16"><rect x="2.500" y="0.500" width="11" height="15" fill="#fde9a3" stroke="#efc95f" stroke-width="1"/><rect x="12.500" y="9.500" width="2" height="6" fill="#fde9a3" stroke="#efc95f" stroke-width="1"/></svg></div>
<div class="t sb" style="left:54px;top:326px;letter-spacing:0.213px;">штеукищгтен</div>
<div class="abs" style="left:26px;top:358px;width:16px;height:16px"><svg class="i16" viewBox="0 0 16 16"><path d="M4,12.500 a3,3 0 0 1 -0.300,-6 a4,4 0 0 1 7.600,-0.800 a3.400,3.400 0 0 1 1.200,6.800z" fill="#0f6cbd"/><path d="M5,12.500 a2.800,2.800 0 0 1 0.500,-5.500 a3.500,3.500 0 0 1 6,1 a2.400,2.400 0 0 1 0.800,4.500z" fill="#2a8fe0"/></svg></div>
<div class="t sb" style="left:46px;top:358px;letter-spacing:0.039px;">OneDrive</div>
<div class="abs" style="left:7px;top:361px;width:10px;height:10px"><svg class="chv" viewBox="0 0 10 10"><path d="M3.500,1 l4,4 l-4,4" fill="none" stroke="#8a8a8a" stroke-width="1.100"/></svg></div>
<div class="abs" style="left:26px;top:390px;width:16px;height:16px"><svg class="i16" viewBox="0 0 16 16"><rect x="0.500" y="1.500" width="15" height="10" fill="#e9eef3" stroke="#6e7f90" stroke-width="1"/><rect x="2" y="3" width="12" height="7" fill="#2d9cf0"/><path d="M8,3 L14,3 L14,6 L6,10 L2,10 L2,8z" fill="#58b6f6" opacity=".7"/><rect x="5" y="12" width="6" height="1" fill="#8292a2"/><rect x="3" y="13.500" width="10" height="1.500" fill="#6e7f90"/></svg></div>
<div class="t sb" style="left:46px;top:390px;letter-spacing:0.019px;">Этот компьютер</div>
<div class="abs" style="left:7px;top:393px;width:10px;height:10px"><svg class="chv" viewBox="0 0 10 10"><path d="M3.500,1 l4,4 l-4,4" fill="none" stroke="#8a8a8a" stroke-width="1.100"/></svg></div>
<div class="abs" style="left:26px;top:422px;width:16px;height:16px"><svg class="i16" viewBox="0 0 16 16"><path d="M2,6.500 h12 l1.500,4 v2.500 h-15 v-2.500z" fill="#d8dde2" stroke="#7e8790" stroke-width="1"/><rect x="1" y="10.500" width="14" height="2.500" fill="#555b62"/><rect x="11.500" y="11.200" width="2" height="1" fill="#60d050"/></svg></div>
<div class="t sb" style="left:46px;top:422px;letter-spacing:0.071px;">Новый том (D:)</div>
<div class="abs" style="left:7px;top:425px;width:10px;height:10px"><svg class="chv" viewBox="0 0 10 10"><path d="M3.500,1 l4,4 l-4,4" fill="none" stroke="#8a8a8a" stroke-width="1.100"/></svg></div>
<div class="abs" style="left:26px;top:454px;width:16px;height:16px"><svg class="i16" viewBox="0 0 16 16"><rect x="5.500" y="1.500" width="10" height="7" fill="#e9eef3" stroke="#6e7f90" stroke-width="1"/><rect x="7" y="3" width="7" height="4" fill="#2d9cf0"/><rect x="9" y="9" width="3" height="1.500" fill="#6e7f90"/><circle cx="5" cy="10.500" r="4.500" fill="#3aa0e8"/><path d="M2,8.500 q2,1 3,-0.500 q1.500,0.500 2.500,2.500 q-1.500,2 -3,3 q-2,-1 -3.500,-2.500z" fill="#55c070"/><circle cx="5" cy="10.500" r="4.500" fill="none" stroke="#2277bb" stroke-width=".8"/></svg></div>
<div class="t sb" style="left:46px;top:454px;letter-spacing:-0.426px;">Сеть</div>
<div class="abs" style="left:7px;top:457px;width:10px;height:10px"><svg class="chv" viewBox="0 0 10 10"><path d="M3.500,1 l4,4 l-4,4" fill="none" stroke="#8a8a8a" stroke-width="1.100"/></svg></div>
<div class="abs" style="left:157px;top:90px;width:4px;height:520px;background:#fff"></div>
<div class="abs" style="left:159px;top:90px;width:1px;height:520px;background:#f0f0f0"></div>
<div class="abs" id="lst" style="left:161px;top:90px;width:607px;height:503px;overflow:hidden;background:#fff">
<div class="t hd" style="left:17px;top:5px">Имя</div>
<svg style="left:137px;top:0px" width="9" height="5" viewBox="0 0 9 5"><path d="M0.500,4.500 l4,-4 l4,4" fill="none" stroke="#6d6d6d" stroke-width="1"/></svg>
<div class="t hd" style="left:278px;top:5px">Дата изменения</div>
<div class="t hd" style="left:423px;top:5px">Тип</div>
<div class="t hd" style="left:542px;top:5px;letter-spacing:-.25px">Размер</div>
<div class="abs" style="left:271px;top:0;width:1px;height:25px;background:#e5e5e5"></div>
<div class="abs" style="left:415px;top:0;width:1px;height:25px;background:#e5e5e5"></div>
<div class="abs" style="left:535px;top:0;width:1px;height:25px;background:#e5e5e5"></div>
<div class="abs" style="left:18px;top:33px;width:16px;height:16px"><svg class="i16" viewBox="0 0 16 16"><rect x="2.500" y="0.500" width="11" height="15" fill="#fde9a3" stroke="#efc95f" stroke-width="1"/><rect x="12.500" y="9.500" width="2" height="6" fill="#fde9a3" stroke="#efc95f" stroke-width="1"/></svg></div>
<div class="t nm" style="left:38px;top:34px;letter-spacing:0.052px;">.vs</div>
<div class="t dt" style="left:278px;top:34px">31.03.2024 18:24</div>
<div class="t tp" style="left:423px;top:34px;letter-spacing:-0.169px;">Папка с файлами</div>
<div class="abs" style="left:18px;top:54px;width:16px;height:16px"><svg class="i16" viewBox="0 0 16 16"><rect x="2.500" y="0.500" width="11" height="15" fill="#fde9a3" stroke="#efc95f" stroke-width="1"/><rect x="12.500" y="9.500" width="2" height="6" fill="#fde9a3" stroke="#efc95f" stroke-width="1"/></svg></div>
<div class="t nm" style="left:38px;top:55px;letter-spacing:0.081px;">AKUMA-main</div>
<div class="t dt" style="left:278px;top:55px">25.08.2024 21:46</div>
<div class="t tp" style="left:423px;top:55px;letter-spacing:-0.169px;">Папка с файлами</div>
<div class="abs" style="left:18px;top:75px;width:16px;height:16px"><svg class="i16" viewBox="0 0 16 16"><rect x="2.500" y="0.500" width="11" height="15" fill="#fde9a3" stroke="#efc95f" stroke-width="1"/><rect x="12.500" y="9.500" width="2" height="6" fill="#fde9a3" stroke="#efc95f" stroke-width="1"/></svg></div>
<div class="t nm" style="left:38px;top:76px;letter-spacing:0.179px;">Akuma-main2</div>
<div class="t dt" style="left:278px;top:76px">27.01.2024 23:08</div>
<div class="t tp" style="left:423px;top:76px;letter-spacing:-0.169px;">Папка с файлами</div>
<div class="abs" style="left:18px;top:96px;width:16px;height:16px"><svg class="i16" viewBox="0 0 16 16"><rect x="2.500" y="0.500" width="11" height="15" fill="#fde9a3" stroke="#efc95f" stroke-width="1"/><rect x="12.500" y="9.500" width="2" height="6" fill="#fde9a3" stroke="#efc95f" stroke-width="1"/></svg></div>
<div class="t nm" style="left:38px;top:97px;letter-spacing:0.113px;">Better-Anubis-main</div>
<div class="t dt" style="left:278px;top:97px">24.08.2024 20:58</div>
<div class="t tp" style="left:423px;top:97px;letter-spacing:-0.169px;">Папка с файлами</div>
<div class="abs" style="left:18px;top:117px;width:16px;height:16px"><svg class="i16" viewBox="0 0 16 16"><rect x="2.500" y="0.500" width="11" height="15" fill="#fde9a3" stroke="#efc95f" stroke-width="1"/><rect x="12.500" y="9.500" width="2" height="6" fill="#fde9a3" stroke="#efc95f" stroke-width="1"/></svg></div>
<div class="t nm" style="left:38px;top:118px;letter-spacing:0.211px;">discord-image-logger-main</div>
<div class="t dt" style="left:278px;top:118px">29.06.2024 5:03</div>
<div class="t tp" style="left:423px;top:118px;letter-spacing:-0.169px;">Папка с файлами</div>
<div class="abs" style="left:18px;top:138px;width:16px;height:16px"><svg class="i16" viewBox="0 0 16 16"><rect x="2.500" y="0.500" width="11" height="15" fill="#fde9a3" stroke="#efc95f" stroke-width="1"/><rect x="12.500" y="9.500" width="2" height="6" fill="#fde9a3" stroke="#efc95f" stroke-width="1"/></svg></div>
<div class="t nm" style="left:38px;top:139px;letter-spacing:0.13px;">Doxxer-Toolkit-main</div>
<div class="t dt" style="left:278px;top:139px">15.03.2024 5:38</div>
<div class="t tp" style="left:423px;top:139px;letter-spacing:-0.169px;">Папка с файлами</div>
<div class="abs" style="left:18px;top:159px;width:16px;height:16px"><svg class="i16" viewBox="0 0 16 16"><rect x="2.500" y="0.500" width="11" height="15" fill="#fde9a3" stroke="#efc95f" stroke-width="1"/><rect x="12.500" y="9.500" width="2" height="6" fill="#fde9a3" stroke="#efc95f" stroke-width="1"/></svg></div>
<div class="t nm" style="left:38px;top:160px;letter-spacing:0.072px;">Fisherman-Roblox-doxer-main</div>
<div class="t dt" style="left:278px;top:160px">12.02.2023 10:12</div>
<div class="t tp" style="left:423px;top:160px;letter-spacing:-0.169px;">Папка с файлами</div>
<div class="abs" style="left:18px;top:180px;width:16px;height:16px"><svg class="i16" viewBox="0 0 16 16"><rect x="2.500" y="0.500" width="11" height="15" fill="#fde9a3" stroke="#efc95f" stroke-width="1"/><rect x="12.500" y="9.500" width="2" height="6" fill="#fde9a3" stroke="#efc95f" stroke-width="1"/></svg></div>
<div class="t nm" style="left:38px;top:181px;letter-spacing:-0.087px;">ID-to-TOKEN-main</div>
<div class="t dt" style="left:278px;top:181px">24.08.2024 19:14</div>
<div class="t tp" style="left:423px;top:181px;letter-spacing:-0.169px;">Папка с файлами</div>
<div class="abs" style="left:18px;top:201px;width:16px;height:16px"><svg class="i16" viewBox="0 0 16 16"><rect x="2.500" y="0.500" width="11" height="15" fill="#fde9a3" stroke="#efc95f" stroke-width="1"/><rect x="12.500" y="9.500" width="2" height="6" fill="#fde9a3" stroke="#efc95f" stroke-width="1"/></svg></div>
<div class="t nm" style="left:38px;top:202px;letter-spacing:0.107px;">interbounty noscamapp</div>
<div class="t dt" style="left:278px;top:202px">28.08.2024 13:00</div>
<div class="t tp" style="left:423px;top:202px;letter-spacing:-0.169px;">Папка с файлами</div>
<div class="abs" style="left:18px;top:222px;width:16px;height:16px"><svg class="i16" viewBox="0 0 16 16"><rect x="2.500" y="0.500" width="11" height="15" fill="#fde9a3" stroke="#efc95f" stroke-width="1"/><rect x="12.500" y="9.500" width="2" height="6" fill="#fde9a3" stroke="#efc95f" stroke-width="1"/></svg></div>
<div class="t nm" style="left:38px;top:223px;letter-spacing:0.04px;">interbounty(d0x t00l)</div>
<div class="t dt" style="left:278px;top:223px">28.08.2024 12:56</div>
<div class="t tp" style="left:423px;top:223px;letter-spacing:-0.169px;">Папка с файлами</div>
<div class="abs" style="left:18px;top:243px;width:16px;height:16px"><svg class="i16" viewBox="0 0 16 16"><rect x="2.500" y="0.500" width="11" height="15" fill="#fde9a3" stroke="#efc95f" stroke-width="1"/><rect x="12.500" y="9.500" width="2" height="6" fill="#fde9a3" stroke="#efc95f" stroke-width="1"/></svg></div>
<div class="t nm" style="left:38px;top:244px;letter-spacing:0.156px;">kadick-main</div>
<div class="t dt" style="left:278px;top:244px">25.08.2024 14:32</div>
<div class="t tp" style="left:423px;top:244px;letter-spacing:-0.169px;">Папка с файлами</div>
<div class="abs" style="left:18px;top:264px;width:16px;height:16px"><svg class="i16" viewBox="0 0 16 16"><rect x="2.500" y="0.500" width="11" height="15" fill="#fde9a3" stroke="#efc95f" stroke-width="1"/><rect x="12.500" y="9.500" width="2" height="6" fill="#fde9a3" stroke="#efc95f" stroke-width="1"/></svg></div>
<div class="t nm" style="left:38px;top:265px;letter-spacing:0.081px;">OnlineSimBot-main</div>
<div class="t dt" style="left:278px;top:265px">29.08.2024 14:58</div>
<div class="t tp" style="left:423px;top:265px;letter-spacing:-0.169px;">Папка с файлами</div>
<div class="abs" style="left:18px;top:285px;width:16px;height:16px"><svg class="i16" viewBox="0 0 16 16"><rect x="2.500" y="0.500" width="11" height="15" fill="#fde9a3" stroke="#efc95f" stroke-width="1"/><rect x="12.500" y="9.500" width="2" height="6" fill="#fde9a3" stroke="#efc95f" stroke-width="1"/></svg></div>
<div class="t nm" style="left:38px;top:286px;letter-spacing:-0.062px;">RedTiger-Tools-main</div>
<div class="t dt" style="left:278px;top:286px">29.08.2024 14:58</div>
<div class="t tp" style="left:423px;top:286px;letter-spacing:-0.169px;">Папка с файлами</div>
<div class="abs" style="left:18px;top:306px;width:16px;height:16px"><svg class="i16" viewBox="0 0 16 16"><rect x="2.500" y="0.500" width="11" height="15" fill="#fde9a3" stroke="#efc95f" stroke-width="1"/><rect x="12.500" y="9.500" width="2" height="6" fill="#fde9a3" stroke="#efc95f" stroke-width="1"/></svg></div>
<div class="t nm" style="left:38px;top:307px;letter-spacing:-0.071px;">Roblox Polhpartz</div>
<div class="t dt" style="left:278px;top:307px">15.07.2024 23:21</div>
<div class="t tp" style="left:423px;top:307px;letter-spacing:-0.169px;">Папка с файлами</div>
<div class="abs" style="left:18px;top:327px;width:16px;height:16px"><svg class="i16" viewBox="0 0 16 16"><rect x="2.500" y="0.500" width="11" height="15" fill="#fde9a3" stroke="#efc95f" stroke-width="1"/><rect x="12.500" y="9.500" width="2" height="6" fill="#fde9a3" stroke="#efc95f" stroke-width="1"/></svg></div>
<div class="t nm" style="left:38px;top:328px;letter-spacing:0.062px;">кс7</div>
<div class="t dt" style="left:278px;top:328px">02.09.2024 15:04</div>
<div class="t tp" style="left:423px;top:328px;letter-spacing:-0.169px;">Папка с файлами</div>
<div class="abs" style="left:18px;top:348px;width:16px;height:16px"><svg class="i16" viewBox="0 0 16 16"><rect x="2.500" y="0.500" width="11" height="15" fill="#fde9a3" stroke="#efc95f" stroke-width="1"/><rect x="12.500" y="9.500" width="2" height="6" fill="#fde9a3" stroke="#efc95f" stroke-width="1"/></svg></div>
<div class="t nm" style="left:38px;top:349px;letter-spacing:0.116px;">купкуеумфещк фтшьы</div>
<div class="t dt" style="left:278px;top:349px">14.05.2024 20:10</div>
<div class="t tp" style="left:423px;top:349px;letter-spacing:-0.169px;">Папка с файлами</div>
<div class="abs" style="left:18px;top:369px;width:16px;height:16px"><svg class="i16" viewBox="0 0 16 16"><rect x="2.500" y="0.500" width="11" height="15" fill="#fde9a3" stroke="#efc95f" stroke-width="1"/><rect x="12.500" y="9.500" width="2" height="6" fill="#fde9a3" stroke="#efc95f" stroke-width="1"/></svg></div>
<div class="t nm" style="left:38px;top:370px;letter-spacing:0.213px;">штеукищгтен</div>
<div class="t dt" style="left:278px;top:370px">28.08.2024 16:47</div>
<div class="t tp" style="left:423px;top:370px;letter-spacing:-0.169px;">Папка с файлами</div>
<div class="abs" style="left:18px;top:390px;width:16px;height:16px"><svg class="i16" viewBox="0 0 16 16"><path d="M2.500,0.500 h8 l3,3 v12 h-11z" fill="#fff" stroke="#8f8f8f" stroke-width="1"/><path d="M10.500,0.500 v3 h3" fill="none" stroke="#8f8f8f" stroke-width="1"/><path d="M4.500,4.500 h5 M4.500,6.500 h7 M4.500,8.500 h7 M4.500,10.500 h7 M4.500,12.500 h7" stroke="#9a9a9a" stroke-width="1"/></svg></div>
<div class="t nm" style="left:38px;top:391px;letter-spacing:-0.555px;">ad</div>
<div class="t dt" style="left:278px;top:391px">11.04.2024 23:57</div>
<div class="t tp" style="left:423px;top:391px;letter-spacing:-0.109px;">Текстовый докум...</div>
<div class="t sz" style="left:535px;width:74px;top:391px">8 КБ</div>
<div class="abs" style="left:18px;top:411px;width:16px;height:16px"><svg class="i16" viewBox="0 0 16 16"><rect width="16" height="16" fill="#ef443b"/><path d="M3.500,8 l3.500,-3.500 l3.500,3.500 l-3.500,3.500z" fill="#fff"/><path d="M9.600,4.400 l1,-1 l4.600,4.600 l-4.600,4.600 l-1,-1 l3.600,-3.600z" fill="#fff"/><g><rect x="0.500" y="8.500" width="7" height="7" fill="#fff" stroke="#b8c4d0" stroke-width="1"/><path d="M2.200,14 q0,-3.200 3,-3.200 v-1.300 l2,2 l-2,2 v-1.300 q-2,0 -3,1.800z" fill="#2b5fb5"/></g></svg></div>
<div class="t nm" style="left:38px;top:412px;letter-spacing:-0.1px;">AnyDesk - Ярлык</div>
<div class="t dt" style="left:278px;top:412px">26.02.2024 22:58</div>
<div class="t tp" style="left:423px;top:412px;letter-spacing:-0.163px;">Ярлык</div>
<div class="t sz" style="left:535px;width:74px;top:412px">2 КБ</div>
<div class="abs" style="left:18px;top:432px;width:16px;height:16px"><svg class="i16" viewBox="0 0 16 16"><path d="M2.500,0.500 h8 l3,3 v12 h-11z" fill="#fff" stroke="#8f8f8f" stroke-width="1"/><path d="M10.500,0.500 v3 h3" fill="none" stroke="#8f8f8f" stroke-width="1"/><path d="M4.500,4.500 h5 M4.500,6.500 h7 M4.500,8.500 h7 M4.500,10.500 h7 M4.500,12.500 h7" stroke="#9a9a9a" stroke-width="1"/></svg></div>
<div class="t nm" style="left:38px;top:433px;letter-spacing:0.084px;">backdoor for redwood</div>
<div class="t dt" style="left:278px;top:433px">29.03.2024 23:41</div>
<div class="t tp" style="left:423px;top:433px;letter-spacing:-0.109px;">Текстовый докум...</div>
<div class="t sz" style="left:535px;width:74px;top:433px">5 КБ</div>
<div class="abs" style="left:18px;top:453px;width:16px;height:16px"><svg class="i16" viewBox="0 0 16 16"><rect width="16" height="16" fill="#8a7f0a"/><g><rect x="0.500" y="8.500" width="7" height="7" fill="#fff" stroke="#b8c4d0" stroke-width="1"/><path d="M2.200,14 q0,-3.200 3,-3.200 v-1.300 l2,2 l-2,2 v-1.300 q-2,0 -3,1.800z" fill="#2b5fb5"/></g></svg></div>
<div class="t nm" style="left:38px;top:454px;letter-spacing:-0.479px;">Banana</div>
<div class="t dt" style="left:278px;top:454px">29.07.2024 0:36</div>
<div class="t tp" style="left:423px;top:454px;letter-spacing:-0.17px;">Ярлык Интернета</div>
<div class="t sz" style="left:535px;width:74px;top:454px">1 КБ</div>
<div class="abs" style="left:18px;top:474px;width:16px;height:16px"><svg class="i16" viewBox="0 0 16 16"><path d="M3,9 L9,3.500 M2,6.500 H9" stroke="#ea7600" stroke-width="1.600" fill="none"/><ellipse cx="10" cy="9" rx="5" ry="4.300" fill="#ea7600"/><circle cx="10.300" cy="9" r="2.500" fill="#fff"/><circle cx="10.300" cy="9" r="1.500" fill="#265787"/><g><rect x="0.500" y="8.500" width="7" height="7" fill="#fff" stroke="#b8c4d0" stroke-width="1"/><path d="M2.200,14 q0,-3.200 3,-3.200 v-1.300 l2,2 l-2,2 v-1.300 q-2,0 -3,1.800z" fill="#2b5fb5"/></g></svg></div>
<div class="t nm" style="left:38px;top:475px;letter-spacing:-0.331px;">Blender 4.2</div>
<div class="t dt" style="left:278px;top:475px">03.08.2024 20:26</div>
<div class="t tp" style="left:423px;top:475px;letter-spacing:-0.163px;">Ярлык</div>
<div class="t sz" style="left:535px;width:74px;top:475px">2 КБ</div>
<div class="abs" style="left:18px;top:495px;width:16px;height:16px"><svg class="i16" viewBox="0 0 16 16"><g transform="rotate(14 8 8)"><rect x="2" y="1" width="5.600" height="5.600" fill="#6a5cf0"/><rect x="8.600" y="1" width="5.600" height="5.600" fill="#7a52f2"/><rect x="2" y="7.600" width="5.600" height="5.600" fill="#8a3ff5"/><rect x="8.600" y="7.600" width="5.600" height="5.600" fill="#9a34f0"/></g></svg></div>
<div class="t nm" style="left:38px;top:496px;letter-spacing:0.33px;">Bloxstrap-v2.7.0</div>
<div class="t dt" style="left:278px;top:496px">30.08.2024 12:40</div>
<div class="t tp" style="left:423px;top:496px;letter-spacing:-0.039px;">Приложение</div>
<div class="t sz" style="left:535px;width:74px;top:496px">10 208 КБ</div>
</div>
<div class="abs" style="left:768px;top:90px;width:17px;height:503px;background:#f0f0f0"></div>
<div class="abs" style="left:769px;top:107px;width:15px;height:92px;background:#cdcdcd"></div>
<svg style="left:772px;top:95px" width="9" height="6" viewBox="0 0 9 6"><path d="M0.700,5 l3.800,-3.800 l3.800,3.800" fill="none" stroke="#505050" stroke-width="1.600"/></svg>
<svg style="left:772px;top:581px" width="9" height="6" viewBox="0 0 9 6"><path d="M0.700,1 l3.800,3.800 l3.800,-3.800" fill="none" stroke="#505050" stroke-width="1.600"/></svg>
<div class="abs" style="left:161px;top:593px;width:607px;height:17px;background:#f0f0f0"></div>
<div class="abs" style="left:178px;top:594px;width:556px;height:15px;background:#cdcdcd"></div>
<svg style="left:165px;top:597px" width="6" height="9" viewBox="0 0 6 9"><path d="M5,0.700 l-3.800,3.800 l3.800,3.800" fill="none" stroke="#505050" stroke-width="1.600"/></svg>
<svg style="left:756px;top:597px" width="6" height="9" viewBox="0 0 6 9"><path d="M1,0.700 l3.800,3.800 l-3.800,3.800" fill="none" stroke="#505050" stroke-width="1.600"/></svg>
<div class="abs" style="left:768px;top:593px;width:17px;height:17px;background:#fff"></div>
<div class="t" style="left:15px;top:614px;color:#2a3f5f;letter-spacing:-.25px">Элементов: 114</div>
<div class="abs" style="left:109px;top:614px;width:1px;height:16px;background:#ececec"></div>
<div class="abs" style="left:737px;top:610px;width:22px;height:23px;background:#cce8f8;border:1px solid #5fb2e8;box-sizing:border-box"></div>
<svg style="left:741px;top:615px" width="15" height="13" viewBox="0 0 15 13"><g fill="#fff" stroke="#8a8a8a" stroke-width=".8"><rect x="0.500" y="0.500" width="3" height="3"/><rect x="0.500" y="4.800" width="3" height="3"/><rect x="0.500" y="9.100" width="3" height="3"/></g><rect x="1.500" y="1.500" width="1" height="1" fill="#3a78c8"/><rect x="1.500" y="5.800" width="1" height="1" fill="#3a78c8"/><rect x="1.500" y="10.100" width="1" height="1" fill="#d03030"/><path d="M5.500,2 h3.500 M10.500,2 h3.500 M5.500,6.300 h3.500 M10.500,6.300 h3.500 M5.500,10.600 h3.500 M10.500,10.600 h3.500" stroke="#666" stroke-width="1"/></svg>
<svg style="left:763px;top:615px" width="15" height="12" viewBox="0 0 15 12"><rect x="0.500" y="0.500" width="14" height="11" fill="#fff" stroke="#8a8a8a" stroke-width="1"/><rect x="2" y="2" width="11" height="7" fill="#6cb4e8"/><path d="M2,6.500 q3,-2 5.500,-0.500 q2.500,1 5.500,-0.500 v3.500 h-11z" fill="#2f6f8f"/></svg>
</div>
<div id="tb" style="background:linear-gradient(90deg,#203641 0%,#1f3441 35%,#1d3040 58%,#1b2d40 75%,#17263f 100%)">
<style>
#tb .btn{position:absolute;top:0;width:48px;height:40px;}
#tb .ul{position:absolute;left:4px;right:4px;bottom:0;height:2px;background:#76b9ed;}
#tb svg{position:absolute;overflow:visible;}
#tb .tray{position:absolute;color:#fff;font-size:12px;white-space:nowrap;}
</style>
<!-- start -->
<svg style="left:16px;top:12px" width="16" height="16" viewBox="0 0 16 16"><path fill="#fff" d="M0,2.300 L6.200,1.450 V7.300 H0Z M7.200,1.300 L16,0 V7.300 H7.200Z M0,8.300 H6.200 V14.550 L0,13.700Z M7.200,8.300 H16 V16 L7.200,14.700Z"/></svg>
<!-- search -->
<div class="abs" style="left:48px;top:0;width:288px;height:40px;background:#f2f2f2;border-top:1px solid #cfd4d8;box-sizing:border-box"></div>
<svg style="left:59px;top:11px" width="18" height="18" viewBox="0 0 18 18"><circle cx="11" cy="7" r="5.2" fill="none" stroke="#222" stroke-width="1.4"/><path d="M7.2,10.8 L1,17" stroke="#222" stroke-width="1.5" fill="none"/></svg>
<div class="abs" style="left:88px;top:11px;font-size:15px;color:#3b3b3b;letter-spacing:.2px">Поиск</div>
<!-- island -->
<svg style="left:256px;top:0" width="80" height="40" viewBox="0 0 80 40">
<defs><linearGradient id="isw" x1="0" y1="0" x2="0" y2="1"><stop offset="0" stop-color="#27bdb8"/><stop offset="1" stop-color="#86e4e4"/></linearGradient>
<linearGradient id="ism" x1="0" y1="0" x2="1" y2="0"><stop offset="0" stop-color="#b4c286"/><stop offset=".5" stop-color="#5f9a6a"/><stop offset="1" stop-color="#123f52"/></linearGradient></defs>
<path d="M7.500,28.600 H75.800 Q76,30.500 71,30.300 Q66,30.600 68,32 Q64,33.800 58,33.600 Q52,34 60,35.500 Q52,38.200 40,37.800 Q26,38.200 24,35.800 Q30,34 22,33.600 Q10,33.500 13,31.500 Q16,30.500 10,30.300 Q7,30 7.500,28.600Z" fill="url(#isw)"/>
<path d="M4,28.600 L11,22.500 L16,21.500 L21.800,19 L26,20.500 L30.800,17.600 L38,21.500 L47.300,13.900 L56,20 L62,24 L66,21.500 L73,26.600 L74,28.600Z" fill="url(#ism)"/>
<path d="M47.300,13.900 L56,21 L62,24 L66,21.500 L73,26.600 L74,28.600 H44 L50,24Z" fill="#143f54" opacity=".85"/>
<path d="M30.800,17.600 L38,21.500 L44,26 L38,28.600 H26 L33,23Z" fill="#1d5a58" opacity=".8"/>
<path d="M4,28.600 L11,22.500 L16,21.500 L18,28.600Z" fill="#c1c990" opacity=".9"/>
<path d="M38,21.500 L47.300,13.900 L49,20 L43,24Z" fill="#a9bb80" opacity=".9"/>
<path d="M50,28.600 L58,23.500 L63,26 L60,28.600Z" fill="#a8bc84" opacity=".9"/>
<path d="M11,28.800 Q13,25.800 18,26.200 Q22,24.600 26,26.200 Q30,25.600 32,27.400 Q36,26.800 37,28.800Z" fill="#e9b969"/>
<path d="M45.400,28.800 Q49,26.400 54,26.800 Q58,24.800 62,26 Q68,26.200 71,27.600 Q75,27.800 75.800,28.800Z" fill="#e9b969"/>
<path d="M11,28.300 H37 V29 H11Z M45.400,28.300 H75.800 V29 H45.400Z" fill="#c98a2e"/>
<g fill="none" stroke="#8a5418" stroke-linecap="round">
<path d="M16.200,25.500 Q15.300,20 15.800,16.500" stroke-width="1.200"/>
<path d="M26.300,25.800 Q29.500,18 30.400,8.500" stroke-width="1.500"/>
<path d="M58,25.800 Q53.500,19 54.400,10.500" stroke-width="1.400"/>
<path d="M62,24.800 Q66,20 67,12.500" stroke-width="1.200"/>
</g>
<path d="M15.6,16.5 Q12.2,14.7 9.9,18.4" fill="none" stroke="#1f7a45" stroke-width="1.57" stroke-linecap="round"/><path d="M15.6,16.5 Q12.9,13.0 11.2,14.2" fill="none" stroke="#0f4f33" stroke-width="1.57" stroke-linecap="round"/><path d="M15.6,16.5 Q15.0,11.8 14.6,13.0" fill="none" stroke="#1f7a45" stroke-width="1.57" stroke-linecap="round"/><path d="M15.6,16.5 Q17.2,12.2 18.3,13.3" fill="none" stroke="#0f4f33" stroke-width="1.57" stroke-linecap="round"/><path d="M15.6,16.5 Q18.7,13.6 20.7,17.2" fill="none" stroke="#1f7a45" stroke-width="1.57" stroke-linecap="round"/><path d="M15.6,16.5 Q19.0,15.7 21.3,19.4" fill="none" stroke="#0f4f33" stroke-width="1.57" stroke-linecap="round"/><path d="M15.6,16.5 Q12.2,14.5 9.9,18.2" fill="none" stroke="#1f7a45" stroke-width="1.57" stroke-linecap="round"/><path d="M30.2,9.2 Q25.9,7.0 23.1,11.6" fill="none" stroke="#1f7a45" stroke-width="1.94" stroke-linecap="round"/><path d="M30.2,9.2 Q26.9,4.8 24.7,6.3" fill="none" stroke="#0f4f33" stroke-width="1.94" stroke-linecap="round"/><path d="M30.2,9.2 Q29.4,3.4 28.9,4.8" fill="none" stroke="#1f7a45" stroke-width="1.94" stroke-linecap="round"/><path d="M30.2,9.2 Q32.2,3.8 33.6,5.3" fill="none" stroke="#0f4f33" stroke-width="1.94" stroke-linecap="round"/><path d="M30.2,9.2 Q34.0,5.6 36.6,10.1" fill="none" stroke="#1f7a45" stroke-width="1.94" stroke-linecap="round"/><path d="M30.2,9.2 Q34.5,8.2 37.3,12.8" fill="none" stroke="#0f4f33" stroke-width="1.94" stroke-linecap="round"/><path d="M30.2,9.2 Q26.0,6.7 23.2,11.3" fill="none" stroke="#1f7a45" stroke-width="1.94" stroke-linecap="round"/><path d="M54.6,11.0 Q50.8,9.1 48.3,13.1" fill="none" stroke="#1f7a45" stroke-width="1.73" stroke-linecap="round"/><path d="M54.6,11.0 Q51.7,7.1 49.7,8.4" fill="none" stroke="#0f4f33" stroke-width="1.73" stroke-linecap="round"/><path d="M54.6,11.0 Q53.9,5.8 53.5,7.1" fill="none" stroke="#1f7a45" stroke-width="1.73" stroke-linecap="round"/><path d="M54.6,11.0 Q56.4,6.2 57.6,7.5" fill="none" stroke="#0f4f33" stroke-width="1.73" stroke-linecap="round"/><path d="M54.6,11.0 Q58.0,7.8 60.3,11.8" fill="none" stroke="#1f7a45" stroke-width="1.73" stroke-linecap="round"/><path d="M54.6,11.0 Q58.4,10.1 60.9,14.2" fill="none" stroke="#0f4f33" stroke-width="1.73" stroke-linecap="round"/><path d="M54.6,11.0 Q50.8,8.8 48.3,12.9" fill="none" stroke="#1f7a45" stroke-width="1.73" stroke-linecap="round"/><path d="M67.2,13.0 Q64.2,11.5 62.2,14.7" fill="none" stroke="#1f7a45" stroke-width="1.35" stroke-linecap="round"/><path d="M67.2,13.0 Q64.9,10.0 63.4,11.0" fill="none" stroke="#0f4f33" stroke-width="1.35" stroke-linecap="round"/><path d="M67.2,13.0 Q66.7,8.9 66.3,9.9" fill="none" stroke="#1f7a45" stroke-width="1.35" stroke-linecap="round"/><path d="M67.2,13.0 Q68.6,9.3 69.5,10.3" fill="none" stroke="#0f4f33" stroke-width="1.35" stroke-linecap="round"/><path d="M67.2,13.0 Q69.8,10.5 71.6,13.6" fill="none" stroke="#1f7a45" stroke-width="1.35" stroke-linecap="round"/><path d="M67.2,13.0 Q70.2,12.3 72.2,15.5" fill="none" stroke="#0f4f33" stroke-width="1.35" stroke-linecap="round"/><path d="M67.2,13.0 Q64.3,11.3 62.3,14.5" fill="none" stroke="#1f7a45" stroke-width="1.35" stroke-linecap="round"/>
</svg>
<!-- mail -->
<div class="btn" style="left:339px">
<svg style="left:11px;top:7px" width="26" height="24" viewBox="0 0 26 24"><path d="M1,8 L13,1 L25,8 V22 H1 Z" fill="#0f5fb4"/><path d="M1,8 L13,16 L25,8 V9 L13,18 L1,9z" fill="#fff"/><path d="M2,8.4 L24,8.4 L13,16.4 Z" fill="#f4f8fc"/><path d="M1,9 L13,18 L25,9 V22 H1 Z" fill="#2196e8"/><path d="M1,22 L10,15.6 L13,18 L16,15.6 L25,22Z" fill="#1a86dd"/></svg>
<svg style="left:28px;top:19px" width="18" height="18" viewBox="0 0 18 18"><circle cx="9" cy="9" r="8" fill="#1f2a33" stroke="#8c969d" stroke-width="1"/><text x="9" y="13.3" font-size="12" fill="#fff" text-anchor="middle" font-family="Liberation Sans, sans-serif">8</text></svg>
</div>
<!-- yandex -->
<div class="btn" style="left:388px"><svg style="left:12px;top:8px" width="24" height="24" viewBox="0 0 24 24"><circle cx="12" cy="12" r="12" fill="#fc3f1d"/><text x="12" y="18.2" font-size="18" font-weight="bold" fill="#fff" text-anchor="middle" font-family="Liberation Sans, sans-serif">Я</text></svg></div>
<!-- explorer -->
<div class="btn" style="left:437px;background:#4d5d69"><div class="ul" style="left:0;right:0"></div>
<svg style="left:12px;top:10px" width="24" height="20" viewBox="0 0 24 20"><path d="M1,1.5 h8 l2,2 h12 v15 h-22z" fill="#e8b33a"/><rect x="1" y="4.5" width="22" height="14" fill="#ffd969"/><path d="M5,19 v-7 a1.5,1.5 0 0 1 1.5,-1.5 h11 a1.5,1.5 0 0 1 1.5,1.5 v7 h-4 v-4.500 h-6 v4.500z" fill="#3a8de0"/><rect x="1" y="18" width="22" height="1" fill="#e8b33a"/></svg></div>
<!-- store -->
<div class="btn" style="left:486px"><div class="ul"></div>
<svg style="left:12px;top:8px" width="24" height="25" viewBox="0 0 24 25"><path d="M7,7 V4 a2,2 0 0 1 2,-2 h6 a2,2 0 0 1 2,2 V7" fill="none" stroke="#2f9be6" stroke-width="2"/><path d="M0.500,6 h23 v15 a3,3 0 0 1 -3,3 h-17 a3,3 0 0 1 -3,-3z" fill="#f5f5f5"/><rect x="7" y="10" width="4.600" height="4.600" fill="#f25022"/><rect x="12.400" y="10" width="4.600" height="4.600" fill="#7fba00"/><rect x="7" y="15.400" width="4.600" height="4.600" fill="#00a4ef"/><rect x="12.400" y="15.400" width="4.600" height="4.600" fill="#ffb900"/></svg></div>
<!-- opera gx -->
<div class="btn" style="left:535px"><svg style="left:12px;top:8px" width="24" height="24" viewBox="0 0 24 24"><circle cx="12" cy="12" r="11.200" fill="none" stroke="#f0264f" stroke-width="1.500"/><ellipse cx="12" cy="12" rx="5.600" ry="9.300" fill="none" stroke="#f0264f" stroke-width="1.300"/><path d="M16,2.500 A 11 11 0 0 1 16 21.500" fill="none" stroke="#f0264f" stroke-width="1.200"/></svg></div>
<!-- chrome -->
<div class="btn" style="left:584px"><svg style="left:12px;top:8px" width="24" height="24" viewBox="0 0 48 48"><circle cx="24" cy="24" r="24" fill="#fbc116"/><path d="M24,24 L3.200,12 A24,24 0 0 1 44.800,12 Z" fill="#e33b2e"/><path d="M24,24 L3.200,12 A24,24 0 0 0 24,48 L34.400,30 Z" fill="#229342"/><path d="M24,24 L44.800,12 H24z" fill="#e33b2e"/><circle cx="24" cy="24" r="11.500" fill="#fff"/><circle cx="24" cy="24" r="9" fill="#3f7de8"/></svg></div>
<!-- edge -->
<div class="btn" style="left:633px"><svg style="left:12px;top:8px" width="24" height="24" viewBox="0 0 48 48"><defs><linearGradient id="eg1" x1="0" y1="0" x2="1" y2="0"><stop offset="0" stop-color="#2ab3e8"/><stop offset=".6" stop-color="#3ccf8e"/><stop offset="1" stop-color="#6ee05a"/></linearGradient></defs><circle cx="24" cy="24" r="24" fill="#1776c9"/><path d="M2,17 A24,24 0 0 1 47.500,20 C48,30 40,32 34,30 C30,28 34,22 30,18 C24,12 10,14 4,26 Z" fill="url(#eg1)"/><path d="M4,26 C2,38 12,48 24,48 C30,48 36,46 40,41 C30,46 18,40 18,30 C18,24 22,20 26,20 C20,14 6,16 4,26Z" fill="#0f56a8"/><path d="M26,20 C30,20 32,24 30,27 C28,30 32,33 37,32 C32,36 24,34 22,28 C21,24 23,21 26,20Z" fill="#1d2d3a"/></svg></div>
<!-- wave -->
<div class="btn" style="left:682px"><div class="ul"></div><svg style="left:14px;top:10px" width="20" height="20" viewBox="0 0 20 20"><rect width="20" height="20" rx="3.500" fill="#050708"/><path d="M2.500,8.500 L5,8.500 L6.500,11.500 L8.500,7.500 L10.500,12 L12.500,7.500 L14.500,11 L17.500,9" fill="none" stroke="#1fd6cf" stroke-width="1.500"/></svg></div>
<!-- dark app -->
<div class="btn" style="left:731px"><div class="ul"></div><svg style="left:17px;top:9px" width="14" height="22" viewBox="0 0 14 22"><rect x="1" y="2" width="12" height="19" rx="5.500" fill="#26292c"/><rect x="6.300" y="2" width="1.400" height="8" fill="#1a1c1e"/></svg></div>
<!-- yandex browser -->
<div class="btn" style="left:780px"><div class="ul"></div><svg style="left:12px;top:8px" width="24" height="24" viewBox="0 0 24 24"><defs><linearGradient id="yb" x1="0" y1="0" x2="0" y2="1"><stop offset="0" stop-color="#ffb300"/><stop offset=".55" stop-color="#ff5a1f"/><stop offset="1" stop-color="#ff2a3c"/></linearGradient></defs><circle cx="12" cy="12" r="12" fill="#fff"/><path d="M5.200,5 h3.600 L12,11.200 L15.200,5 h3.600 L13.600,14.200 V21.500 h-3.200 V14.200Z" fill="url(#yb)"/></svg></div>
<!-- roblox studio -->
<div class="btn" style="left:829px"><div class="ul"></div><svg style="left:11px;top:8px" width="26" height="25" viewBox="0 0 26 25"><g transform="rotate(14 13 12.500)"><path d="M3,2 h20 v8.500 h-7 v3 h-6 v-3 h-7z" fill="#2aa5ee"/><path d="M3,22.500 h20 v-8.500 h-4 v3 h-12 v-3 h-4z" fill="#1585dd"/><rect x="10.500" y="10" width="5" height="4.500" fill="#1d2d3a"/></g></svg></div>
<!-- tray -->
<svg style="left:1035px;top:15px" width="13" height="9" viewBox="0 0 13 9"><path d="M0.500,7.800 L6.500,1.500 L12.500,7.800" fill="none" stroke="#fff" stroke-width="1.300"/></svg>
<svg style="left:1058px;top:11px" width="15" height="18" viewBox="0 0 15 18"><rect x="1.500" y="5" width="8.500" height="8" rx="1.500" fill="none" stroke="#fff" stroke-width="1.100"/><path d="M10,8 L13.500,6 V12 L10,10Z" fill="none" stroke="#fff" stroke-width="1"/><circle cx="5.700" cy="8" r="1.100" fill="#fff"/><path d="M3.500,11.500 a2.300,2 0 0 1 4.400,0z" fill="#fff"/><path d="M3,2.500 Q7.500,-0.500 12,2.500 M3,15.500 Q7.500,18.500 12,15.500" stroke="#c8d0d8" stroke-width="1" fill="none"/></svg>
<svg style="left:1080px;top:11px" width="18" height="18" viewBox="0 0 18 18"><path d="M1.500,6.500 h3 l4,-3.500 v12 l-4,-3.500 h-3z" fill="none" stroke="#fff" stroke-width="1.100"/><path d="M10.500,6.500 q1.500,2.500 0,5" stroke="#fff" stroke-width="1" fill="none"/><path d="M12.500,4.800 q2.600,4.200 0,8.400" stroke="#b9c2ca" stroke-width="1" fill="none"/><path d="M14.600,3.200 q3.500,5.800 0,11.600" stroke="#7d8a95" stroke-width="1" fill="none"/></svg>
<svg style="left:1105px;top:13px" width="17" height="15" viewBox="0 0 17 15"><rect x="4.500" y="1.500" width="12" height="8.500" fill="none" stroke="#fff" stroke-width="1.100"/><path d="M10.500,10 v3 M7,13.500 h7" stroke="#fff" stroke-width="1.100"/><rect x="0.500" y="0.500" width="5" height="4" fill="#1d2d3a" stroke="#fff" stroke-width="1"/><path d="M3,4.500 v9" stroke="#fff" stroke-width="1"/></svg>
<div class="tray" style="left:1129.500px;top:13px;letter-spacing:-.2px">ENG</div>
<div class="tray" style="left:1160px;top:4px;width:68px;text-align:center;letter-spacing:-.5px">17:56</div>
<div class="tray" style="left:1160px;top:22px;width:68px;text-align:center;letter-spacing:-.5px">17.09.2024</div>
<svg style="left:1238px;top:12px" width="18" height="14" viewBox="0 0 18 14"><path d="M0.500,0.500 h16.500 v10 h-11 l-3,3 v-3 h-2.500z" fill="#fff"/><path d="M3,3.500 h11.500 M3,6 h11.500 M3,8.500 h8" stroke="#1d2d3a" stroke-width="1"/></svg>
<svg style="left:1243px;top:17px" width="24" height="22" viewBox="0 0 24 22"><ellipse cx="12" cy="10.500" rx="10.200" ry="8.600" fill="#3e444d" stroke="#868d96" stroke-width="1"/><text x="12" y="15.300" font-size="12.500" font-weight="bold" fill="#fff" text-anchor="middle" font-family="Liberation Sans, sans-serif">26</text></svg>
<div class="abs" style="left:1275px;top:0;width:1px;height:40px;background:#7a8791"></div>
</div>
</body>
</html>
